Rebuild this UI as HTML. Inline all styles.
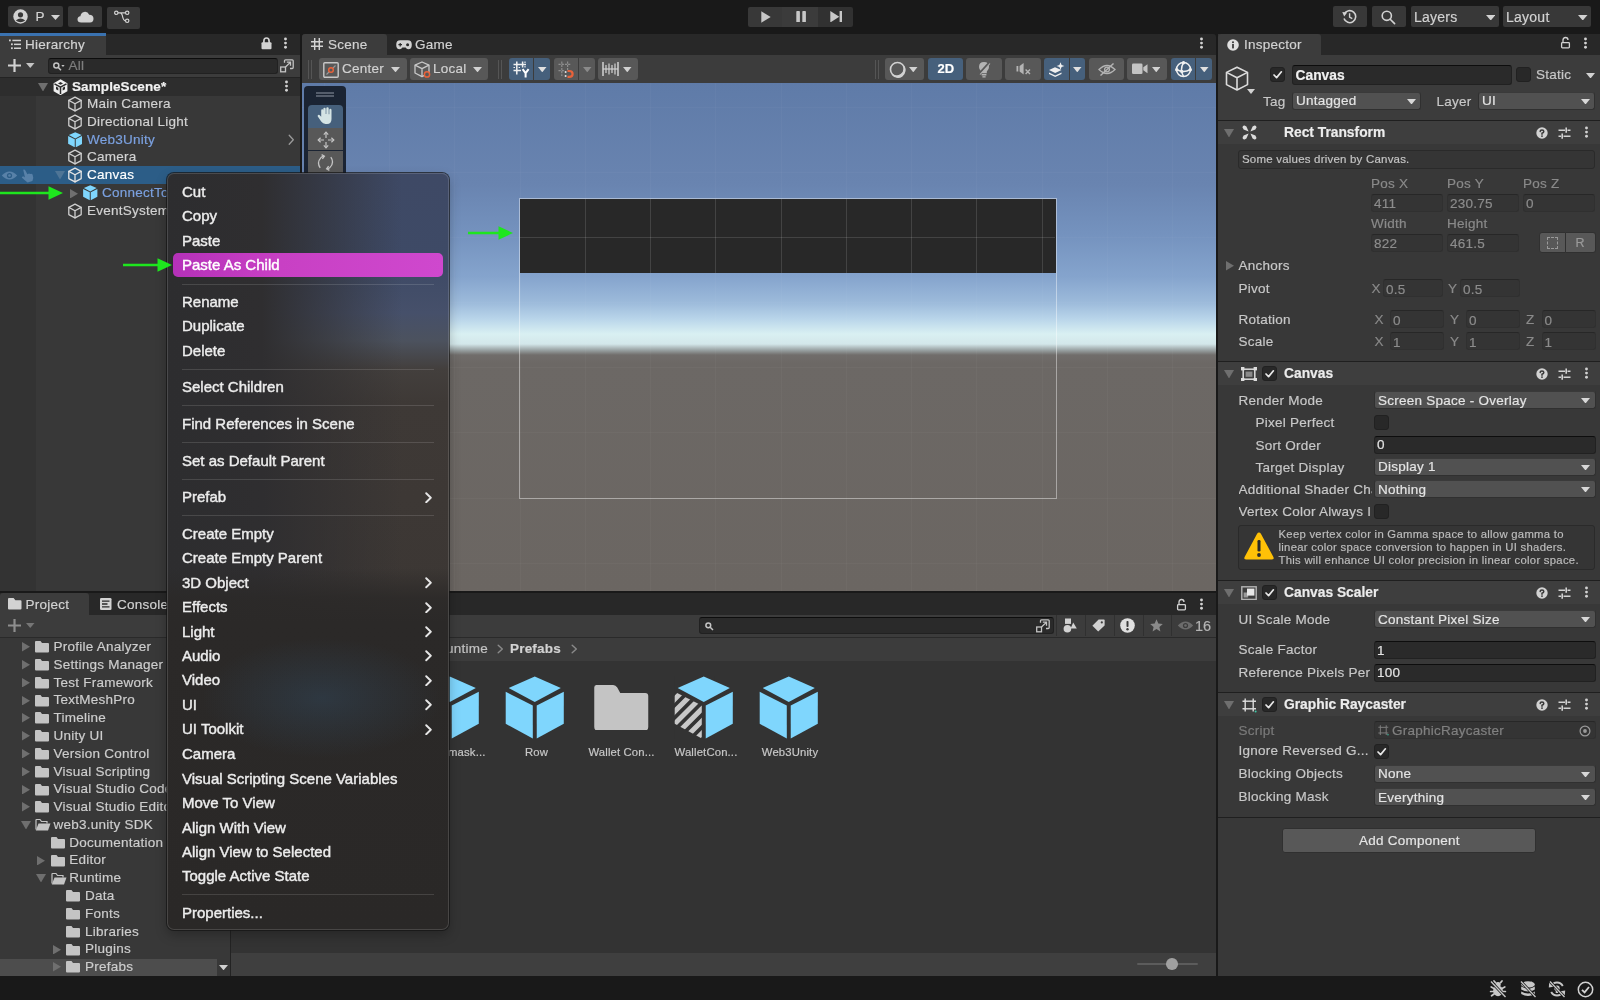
<!DOCTYPE html>
<html lang="en"><head><meta charset="utf-8"><title>Unity - SampleScene</title>
<style>
*{box-sizing:border-box;margin:0;padding:0}
html,body{width:1600px;height:1000px;overflow:hidden;background:#191919}
body{position:relative;font-family:"Liberation Sans",sans-serif;font-size:13.5px;letter-spacing:.25px;color:#d2d2d2}
div,span,svg{position:absolute}
.t{white-space:nowrap;line-height:20px;height:20px;-webkit-text-stroke:.18px currentColor}
.m{white-space:nowrap;line-height:20px;height:20px;font-size:15px;letter-spacing:0;color:#ececec;-webkit-text-stroke:.42px #ececec}
.dd{background:#515151;border-radius:3px;border:1px solid #303030;border-top-color:#3a3a3a}
.fld{background:#2a2a2a;border-radius:3px;border:1px solid #212121;border-top-color:#0d0d0d}
.dfld{background:#343434;border-radius:3px;border:1px solid #303030;border-top-color:#272727}
.btn{background:#585858;border-radius:3px;border:1px solid #303030}
.tb{background:#383838;border-radius:2px}
.cb{background:#282828;border-radius:3px;border:1px solid #212121}
</style></head><body>
<div id="app" style="left:0;top:0;width:1600px;height:1000px;will-change:transform">
<div style="left:0px;top:0px;width:1600px;height:33px;background:#191919;"></div>
<div class="tb" style="left:8px;top:6px;width:55px;height:21px;"></div>
<svg style="left:13px;top:9px;" width="15" height="15" viewBox="0 0 15 15"><circle cx="7.5" cy="7.5" r="7.2" fill="#d2d2d2"/><circle cx="7.5" cy="5.8" r="2.6" fill="#383838"/><path d="M2.8 11.6 Q7.5 7.6 12.2 11.6 Q7.5 15 2.8 11.6Z" fill="#383838"/></svg>
<span class="t" style="left:35.5px;top:6.75px;color:#d2d2d2;font-size:13.5px;">P</span>
<svg style="left:51px;top:14.5px;" width="9" height="5" viewBox="0 0 9 5"><path fill="#d2d2d2" d="M0 0 H9 L4.5 5 Z"/></svg>
<div class="tb" style="left:68px;top:6px;width:34px;height:21px;"></div>
<svg style="left:76.5px;top:10.5px;" width="17" height="12" viewBox="0 0 17 12"><path fill="#d2d2d2" d="M4.2 11.5 Q0.5 11.5 0.5 8.3 Q0.5 5.6 3.4 5.2 Q3.8 1.8 7 1 Q10.6 0.2 12.2 3.8 Q16.5 4 16.5 7.8 Q16.5 11.5 13 11.5 Z"/></svg>
<div class="tb" style="left:107px;top:6.5px;width:33px;height:22px;"></div>
<svg style="left:114px;top:10px;" width="16" height="14" viewBox="0 0 16 14"><g fill="none" stroke="#d2d2d2" stroke-width="1.2"><circle cx="2.3" cy="2.8" r="1.7"/><circle cx="13.2" cy="2.8" r="1.7"/><circle cx="13.2" cy="10.8" r="1.7"/><path d="M4 2.8 H11.5 M6.2 2.8 Q7.5 2.8 8.2 5 Q9.3 10.8 11.5 10.8"/></g></svg>
<div style="left:748px;top:6.5px;width:34px;height:20px;background:#383838;border-radius:2px 0 0 2px"></div>
<div style="left:782px;top:6.5px;width:36px;height:20px;background:#3b3b3b;"></div>
<div style="left:818px;top:6.5px;width:34.5px;height:20px;background:#313131;border-radius:0 2px 2px 0"></div>
<svg style="left:760.5px;top:10.5px;" width="10" height="12" viewBox="0 0 10 12"><path d="M0.3 0.3 L9.7 6 L0.3 11.7Z" fill="#c8c8c8"/></svg>
<svg style="left:795.5px;top:10.8px;" width="11" height="11.5" viewBox="0 0 11 11.5"><rect x="0.3" y="0" width="3.6" height="11.5" rx=".8" fill="#c8c8c8"/><rect x="6.3" y="0" width="3.6" height="11.5" rx=".8" fill="#c8c8c8"/></svg>
<svg style="left:829.5px;top:10.8px;" width="13" height="11.5" viewBox="0 0 13 11.5"><path d="M0.3 0 L9.3 5.75 L0.3 11.5Z" fill="#c8c8c8"/><rect x="9.6" y="0" width="2.4" height="11.5" fill="#c8c8c8"/></svg>
<div class="tb" style="left:1333px;top:6px;width:34px;height:21px;"></div>
<svg style="left:1342px;top:9px;" width="15" height="15" viewBox="0 0 15 15"><g fill="none" stroke="#d2d2d2" stroke-width="1.6"><path d="M2.3 5 A6 6 0 1 1 2 9.6"/><path d="M7.6 4.2 V8 L10.3 9.6" stroke-width="1.4"/></g><path d="M0.3 3 L5.2 3.6 L2.2 7.4Z" fill="#d2d2d2"/></svg>
<div class="tb" style="left:1372px;top:6px;width:34px;height:21px;"></div>
<svg style="left:1381px;top:9.5px;" width="15" height="15" viewBox="0 0 15 15"><g fill="none" stroke="#d2d2d2" stroke-width="1.6"><circle cx="5.8" cy="5.8" r="4.6"/><path d="M9.2 9.2 L13.6 13.6" stroke-linecap="round"/></g></svg>
<div class="tb" style="left:1410.5px;top:6px;width:88px;height:21px;"></div>
<span class="t" style="left:1414px;top:6.75px;font-size:14px;">Layers</span>
<svg style="left:1485.5px;top:14.5px;" width="9.5" height="5.5" viewBox="0 0 9.5 5.5"><path fill="#d2d2d2" d="M0 0 H9.5 L4.75 5.5 Z"/></svg>
<div class="tb" style="left:1503px;top:6px;width:87.5px;height:21px;"></div>
<span class="t" style="left:1506px;top:6.75px;font-size:14px;">Layout</span>
<svg style="left:1578px;top:14.5px;" width="9.5" height="5.5" viewBox="0 0 9.5 5.5"><path fill="#d2d2d2" d="M0 0 H9.5 L4.75 5.5 Z"/></svg>
<div style="left:0px;top:33.5px;width:299.5px;height:557px;background:#383838;"></div>
<div style="left:0px;top:33.5px;width:299.5px;height:21.5px;background:#282828;"></div>
<div style="left:0px;top:33.5px;width:105.5px;height:21.5px;background:#3c3c3c;border-radius:3px 3px 0 0"></div>
<div style="left:0px;top:33.3px;width:105.5px;height:2.4px;background:#3a72b0;"></div>
<svg style="left:8.5px;top:39px;" width="12" height="11" viewBox="0 0 12 11"><g fill="#d2d2d2"><rect x="0" y="0.5" width="1.8" height="1.8"/><rect x="3.4" y="0.7" width="8.6" height="1.5"/><rect x="2" y="4.4" width="1.8" height="1.8"/><rect x="5" y="4.6" width="7" height="1.5"/><rect x="2" y="8.3" width="1.8" height="1.8"/><rect x="5" y="8.5" width="7" height="1.5"/></g></svg>
<span class="t" style="left:25px;top:34.95px;">Hierarchy</span>
<svg style="left:260.7px;top:36.8px;" width="11" height="13" viewBox="0 0 11 13"><path fill="none" stroke="#d2d2d2" stroke-width="1.7" d="M2.9 6 V4.2 Q2.9 1 5.5 1 Q8.1 1 8.1 4.2 V6"/><rect x="0.5" y="5.3" width="10" height="6.9" rx="1" fill="#d2d2d2"/></svg>
<svg style="left:282.5px;top:37.1px;" width="5" height="12.2" viewBox="0 0 5 12.2"><circle cx="2.5" cy="2.0" r="1.45" fill="#d2d2d2"/><circle cx="2.5" cy="6.1" r="1.45" fill="#d2d2d2"/><circle cx="2.5" cy="10.2" r="1.45" fill="#d2d2d2"/></svg>
<div style="left:0px;top:55px;width:299.5px;height:22.5px;background:#3c3c3c;"></div>
<div style="left:0px;top:77px;width:299.5px;height:1px;background:#232323;"></div>
<svg style="left:8px;top:59px;" width="13" height="13" viewBox="0 0 13 13"><path d="M6.5 0 V13 M0 6.5 H13" stroke="#d2d2d2" stroke-width="2.2"/></svg>
<svg style="left:26px;top:63.3px;" width="8.5" height="5" viewBox="0 0 8.5 5"><path fill="#c4c4c4" d="M0 0 H8.5 L4.25 5 Z"/></svg>
<div class="fld" style="left:48px;top:57.5px;width:230px;height:16.5px;"></div>
<svg style="left:53px;top:61.5px;" width="12" height="9" viewBox="0 0 12 9"><g fill="none" stroke="#c4c4c4" stroke-width="1.5"><circle cx="3.3" cy="3.5" r="2.5"/><path d="M5.2 5.4 L8 8.2"/></g><path d="M8.3 3 H11.6 L10 5 Z" fill="#c4c4c4"/></svg>
<span class="t" style="left:68.5px;top:56.25px;color:#7e7e7e;font-size:13.5px;">All</span>
<svg style="left:280px;top:58.5px;" width="14" height="14" viewBox="0 0 14 14"><g fill="none" stroke="#c4c4c4" stroke-width="1.3"><path d="M4.5 3.8 V1.8 Q4.5 0.8 5.5 0.8 H12.2 Q13.2 0.8 13.2 1.8 V8.5 Q13.2 9.5 12.2 9.5 H10"/><rect x="0.7" y="8" width="4.8" height="4.8"/><path d="M5.5 8 L10.3 3.4 M6.8 3.2 H10.5 V6.8"/></g></svg>
<div style="left:0px;top:78px;width:36px;height:512.5px;background:#333333;"></div>
<div style="left:0px;top:78px;width:299.5px;height:17.5px;background:#2d2d2d;"></div>
<svg style="left:37.5px;top:82.5px;" width="10" height="8.5" viewBox="0 0 10 8.5"><path fill="#6f6f6f" d="M0 0 H10 L5.0 8.5 Z"/></svg>
<svg style="left:52.5px;top:78.5px;" width="15" height="16.5" viewBox="0 0 15 16.5"><path fill="#f0f0f0" d="M7.5 0.3 L14.4 4.2 V12.2 L7.5 16.2 L0.6 12.2 V4.2 Z"/><g fill="none" stroke="#2d2d2d" stroke-width="1.5"><path d="M7.5 8.2 V15 M7.5 8.2 L1.5 4.8 M7.5 8.2 L13.5 4.8"/></g><g fill="#2d2d2d"><path d="M7.5 3 L10 4.4 L7.5 5.8 L5 4.4Z"/><path d="M3 7.4 L5.3 8.7 V11.5 L3 10.2Z"/><path d="M12 7.4 L9.7 8.7 V11.5 L12 10.2Z"/></g></svg>
<span class="t" style="left:72px;top:76.75px;color:#f2f2f2;font-size:13.5px;font-weight:700;letter-spacing:.1px">SampleScene*</span>
<svg style="left:283.5px;top:80.3px;" width="5" height="12.2" viewBox="0 0 5 12.2"><circle cx="2.5" cy="2.0" r="1.45" fill="#d2d2d2"/><circle cx="2.5" cy="6.1" r="1.45" fill="#d2d2d2"/><circle cx="2.5" cy="10.2" r="1.45" fill="#d2d2d2"/></svg>
<svg style="left:67px;top:96px;" width="16" height="16" viewBox="0 0 16 16"><g fill="none" stroke="#cfcfcf" stroke-width="1.3" stroke-linejoin="round" stroke-linecap="round"><path d="M8 1.2 L14.2 4.4 V11.6 L8 14.9 L1.8 11.6 V4.4 Z"/><path d="M1.8 4.4 L8 7.7 L14.2 4.4 M8 7.7 V14.9"/></g></svg>
<span class="t" style="left:87px;top:94.25px;">Main Camera</span>
<svg style="left:67px;top:113.7px;" width="16" height="16" viewBox="0 0 16 16"><g fill="none" stroke="#cfcfcf" stroke-width="1.3" stroke-linejoin="round" stroke-linecap="round"><path d="M8 1.2 L14.2 4.4 V11.6 L8 14.9 L1.8 11.6 V4.4 Z"/><path d="M1.8 4.4 L8 7.7 L14.2 4.4 M8 7.7 V14.9"/></g></svg>
<span class="t" style="left:87px;top:111.95px;">Directional Light</span>
<svg style="left:67.5px;top:131.9px;" width="14.5" height="15.5" viewBox="0 0 60 64"><g fill="#7fd6fd"><path d="M30 0.5 L56.5 12.3 L30 26.5 L3.5 12.3 Z"/><path d="M0.5 16 L28 30 V63.4 L0.5 48.6 Z"/><path d="M59.5 16 L32 30 V63.4 L59.5 48.6 Z"/></g></svg>
<span class="t" style="left:87px;top:129.75px;color:#7ba1e0;">Web3Unity</span>
<svg style="left:67px;top:149.2px;" width="16" height="16" viewBox="0 0 16 16"><g fill="none" stroke="#cfcfcf" stroke-width="1.3" stroke-linejoin="round" stroke-linecap="round"><path d="M8 1.2 L14.2 4.4 V11.6 L8 14.9 L1.8 11.6 V4.4 Z"/><path d="M1.8 4.4 L8 7.7 L14.2 4.4 M8 7.7 V14.9"/></g></svg>
<span class="t" style="left:87px;top:147.45px;">Camera</span>
<svg style="left:288px;top:134px;" width="6.5" height="11.5" viewBox="0 0 6.5 11.5"><path fill="none" stroke="#9a9a9a" stroke-width="1.3" stroke-linecap="round" stroke-linejoin="round" d="M1.2 1.2 L5.3 5.75 L1.2 10.3"/></svg>
<div style="left:0px;top:166.4px;width:299.5px;height:17.9px;background:#2c5d87;"></div>
<svg style="left:1px;top:169.5px;" width="17" height="11" viewBox="0 0 17 11"><path d="M0.8 5.5 Q8.5 -2.6 16.2 5.5 Q8.5 13.6 0.8 5.5Z" fill="#5881a8"/><circle cx="8.5" cy="5.5" r="2.6" fill="#2c5d87"/><circle cx="8.5" cy="5.5" r="1.3" fill="#5881a8"/></svg>
<svg style="left:21px;top:168.5px;" width="13" height="14" viewBox="0 0 13 14"><path fill="#5881a8" d="M2.2 0.8 Q3.4 0 4.2 1.2 L6.4 5.2 L8 4.6 L9.2 5 L10.4 4.8 L11.6 5.6 Q13 9 11.4 12 L6.6 13.4 Q3.4 11 0.8 8.4 Q1.2 7 2.8 7.6 L4 8.4 Z"/></svg>
<svg style="left:55px;top:171px;" width="10" height="8.5" viewBox="0 0 10 8.5"><path fill="#4f7596" d="M0 0 H10 L5.0 8.5 Z"/></svg>
<svg style="left:67px;top:167px;" width="16" height="16" viewBox="0 0 16 16"><g fill="none" stroke="#e4e4e4" stroke-width="1.3" stroke-linejoin="round" stroke-linecap="round"><path d="M8 1.2 L14.2 4.4 V11.6 L8 14.9 L1.8 11.6 V4.4 Z"/><path d="M1.8 4.4 L8 7.7 L14.2 4.4 M8 7.7 V14.9"/></g></svg>
<span class="t" style="left:87px;top:165.25px;color:#ffffff;">Canvas</span>
<svg style="left:70px;top:188.5px;" width="8" height="9.5" viewBox="0 0 8 9.5"><path fill="#6f6f6f" d="M0 0 L8 4.75 L0 9.5 Z"/></svg>
<svg style="left:83px;top:185.20000000000002px;" width="14.5" height="15.5" viewBox="0 0 60 64"><g fill="#7fd6fd"><path d="M30 0.5 L56.5 12.3 L30 26.5 L3.5 12.3 Z"/><path d="M0.5 16 L28 30 V63.4 L0.5 48.6 Z"/><path d="M59.5 16 L32 30 V63.4 L59.5 48.6 Z"/></g></svg>
<span class="t" style="left:102px;top:183.05px;color:#7ba1e0;">ConnectTo</span>
<svg style="left:67px;top:202.6px;" width="16" height="16" viewBox="0 0 16 16"><g fill="none" stroke="#cfcfcf" stroke-width="1.3" stroke-linejoin="round" stroke-linecap="round"><path d="M8 1.2 L14.2 4.4 V11.6 L8 14.9 L1.8 11.6 V4.4 Z"/><path d="M1.8 4.4 L8 7.7 L14.2 4.4 M8 7.7 V14.9"/></g></svg>
<span class="t" style="left:87px;top:200.85px;">EventSystem</span>
<div style="left:302px;top:33.5px;width:914px;height:21.5px;background:#282828;border-radius:3px 3px 0 0"></div>
<div style="left:302px;top:33.5px;width:85px;height:21.5px;background:#3c3c3c;border-radius:3px 3px 0 0"></div>
<svg style="left:311px;top:38px;" width="12" height="12" viewBox="0 0 12 12"><path d="M3.7 0 V12 M8.3 0 V12 M0 3.7 H12 M0 8.3 H12" stroke="#d2d2d2" stroke-width="1.45"/></svg>
<span class="t" style="left:328px;top:34.95px;">Scene</span>
<svg style="left:396px;top:40px;" width="16" height="9.5" viewBox="0 0 16 9.5"><path fill="#d2d2d2" d="M4.2 0.3 H11.8 Q15.8 0.3 15.8 4.7 Q15.8 9.2 12.2 9.2 Q10.6 9.2 9.6 7.6 H6.4 Q5.4 9.2 3.8 9.2 Q0.2 9.2 0.2 4.7 Q0.2 0.3 4.2 0.3Z"/><path d="M2.4 4.7 H6 M4.2 2.9 V6.5" stroke="#282828" stroke-width="1.2"/><circle cx="11.6" cy="4.7" r="1.5" fill="#282828"/></svg>
<span class="t" style="left:415px;top:34.95px;">Game</span>
<svg style="left:1198.5px;top:37.1px;" width="5" height="12.2" viewBox="0 0 5 12.2"><circle cx="2.5" cy="2.0" r="1.45" fill="#d2d2d2"/><circle cx="2.5" cy="6.1" r="1.45" fill="#d2d2d2"/><circle cx="2.5" cy="10.2" r="1.45" fill="#d2d2d2"/></svg>
<div style="left:302px;top:55px;width:914px;height:27.5px;background:#3c3c3c;"></div>
<div style="left:302px;top:82.5px;width:914px;height:1px;background:#232323;"></div>
<div style="left:308px;top:60px;width:1px;height:19px;background:#555;"></div>
<div style="left:310.5px;top:60px;width:1px;height:19px;background:#555;"></div>
<div style="left:319px;top:58px;width:87.5px;height:21.5px;background:#585858;border-radius:3px"></div>
<svg style="left:323px;top:61.5px;" width="16" height="16" viewBox="0 0 16 16"><rect x="0.8" y="0.8" width="14.4" height="14.4" rx="1" fill="none" stroke="#c8c8c8" stroke-width="1.4"/><path d="M3.5 12.5 L12.5 3.5" stroke="#9a9a9a" stroke-width="1.1"/><circle cx="8" cy="8" r="2.3" fill="#585858" stroke="#e8623a" stroke-width="1.5"/></svg>
<span class="t" style="left:342px;top:59.25px;">Center</span>
<svg style="left:391px;top:66.5px;" width="9" height="5.3" viewBox="0 0 9 5.3"><path fill="#d2d2d2" d="M0 0 H9 L4.5 5.3 Z"/></svg>
<div style="left:410px;top:58px;width:78px;height:21.5px;background:#585858;border-radius:3px"></div>
<svg style="left:414px;top:60.5px;" width="18" height="18" viewBox="0 0 18 18"><g fill="none" stroke="#c8c8c8" stroke-width="1.3" stroke-linejoin="round"><path d="M8 1 L15 4.2 V12 L8 15.6 L1 12 V4.2Z"/><path d="M1 4.2 L8 7.6 L15 4.2 M8 7.6 V15.6"/></g><circle cx="13" cy="13.4" r="2.6" fill="#585858" stroke="#e8623a" stroke-width="1.5"/></svg>
<span class="t" style="left:433px;top:59.25px;">Local</span>
<svg style="left:473px;top:66.5px;" width="9" height="5.3" viewBox="0 0 9 5.3"><path fill="#d2d2d2" d="M0 0 H9 L4.5 5.3 Z"/></svg>
<div style="left:498px;top:60px;width:1px;height:19px;background:#555;"></div>
<div style="left:500.5px;top:60px;width:1px;height:19px;background:#555;"></div>
<div style="left:509px;top:58px;width:24px;height:21.5px;background:#46607c;border-radius:3px 0 0 3px"></div>
<div style="left:534px;top:58px;width:16px;height:21.5px;background:#46607c;border-radius:0 3px 3px 0"></div>
<svg style="left:513px;top:61px;" width="17" height="17" viewBox="0 0 17 17"><g stroke="#f0f0f0" stroke-width="1.5" fill="none"><path d="M3.8 0.5 V13.5 M9.6 0.5 V6.5 M0.5 3.4 H13 M0.5 9.6 H8"/><path d="M0.5 6.5 H2 M5.6 6.5 H7 M12 0.5 V2 M12 5 V6.5" stroke-width="1.1"/></g><path d="M9.6 8.2 L12.6 12.2 V16.4 M15.6 8.2 L12.6 12.2" stroke="#ffffff" stroke-width="2" fill="none"/></svg>
<svg style="left:538px;top:66.5px;" width="8.5" height="5.3" viewBox="0 0 8.5 5.3"><path fill="#e0e0e0" d="M0 0 H8.5 L4.25 5.3 Z"/></svg>
<div style="left:554px;top:58px;width:24px;height:21.5px;background:#585858;border-radius:3px 0 0 3px"></div>
<div style="left:579px;top:58px;width:16px;height:21.5px;background:#585858;border-radius:0 3px 3px 0"></div>
<svg style="left:558px;top:61px;" width="17" height="17" viewBox="0 0 17 17"><g stroke="#8e8e8e" stroke-width="1.2" fill="none" stroke-dasharray="2.2 1"><path d="M3.8 0.5 V15 M9.6 0.5 V9 M0.5 3.4 H13 M0.5 9.6 H7"/></g><circle cx="7.6" cy="11" r="1" fill="#e0e0e0"/><circle cx="7.6" cy="15" r="1" fill="#e0e0e0"/><path d="M9.5 10 H11.3 Q14.6 10 14.6 12.9 Q14.6 15.8 11.3 15.8 H9.5" stroke="#e8623a" stroke-width="2.2" fill="none"/></svg>
<svg style="left:583px;top:66.5px;" width="8.5" height="5.3" viewBox="0 0 8.5 5.3"><path fill="#8a8a8a" d="M0 0 H8.5 L4.25 5.3 Z"/></svg>
<div style="left:598px;top:58px;width:39.5px;height:21.5px;background:#585858;border-radius:3px"></div>
<svg style="left:601.5px;top:62px;" width="17" height="14" viewBox="0 0 17 14"><g stroke="#d2d2d2" fill="none"><path d="M1 0 V14 M16 0 V14" stroke-width="1.5"/><path d="M4 3 V11 M7 1.5 V12.5 M10 3 V11 M13 1.5 V12.5" stroke-width="1.2"/><path d="M1 7 H16" stroke-width="1.2"/></g></svg>
<svg style="left:623px;top:66.5px;" width="8.5" height="5.3" viewBox="0 0 8.5 5.3"><path fill="#d2d2d2" d="M0 0 H8.5 L4.25 5.3 Z"/></svg>
<div style="left:875px;top:60px;width:1px;height:19px;background:#555;"></div>
<div style="left:877.5px;top:60px;width:1px;height:19px;background:#555;"></div>
<div style="left:884.5px;top:58px;width:39.5px;height:21.5px;background:#585858;border-radius:3px"></div>
<svg style="left:889px;top:61px;" width="17" height="17" viewBox="0 0 17 17"><circle cx="8.5" cy="8.5" r="7" fill="none" stroke="#d2d2d2" stroke-width="1.6"/><path d="M14.6 5 A7 7 0 0 1 3.2 13.4 A7.4 7.4 0 0 0 14.6 5Z" fill="#d2d2d2" stroke="#d2d2d2" stroke-width="1.2"/></svg>
<svg style="left:909px;top:66.5px;" width="8.5" height="5.3" viewBox="0 0 8.5 5.3"><path fill="#d2d2d2" d="M0 0 H8.5 L4.25 5.3 Z"/></svg>
<div style="left:927.5px;top:58px;width:35.5px;height:21.5px;background:#46607c;border-radius:3px"></div>
<span class="t" style="left:937.5px;top:59.25px;color:#ffffff;font-size:13px;font-weight:700;letter-spacing:0">2D</span>
<div style="left:966.3px;top:58px;width:35.3px;height:21.5px;background:#585858;border-radius:3px"></div>
<svg style="left:977px;top:60.5px;" width="14" height="17" viewBox="0 0 14 17"><path fill="#b4b4b4" d="M7 1 Q12 1 12 6 Q12 8.6 9.8 10.4 V12.2 H4.2 V10.4 Q2 8.6 2 6 Q2 1 7 1Z"/><rect x="4.6" y="13" width="4.8" height="1.5" fill="#b4b4b4"/><rect x="5.4" y="15.2" width="3.2" height="1.3" fill="#b4b4b4"/><path d="M12.5 1.5 L2 13" stroke="#585858" stroke-width="2.4"/><path d="M13 2.5 L3 13.5" stroke="#b4b4b4" stroke-width="1.1"/></svg>
<div style="left:1005px;top:58px;width:35.6px;height:21.5px;background:#585858;border-radius:3px"></div>
<svg style="left:1016px;top:62px;" width="16" height="14" viewBox="0 0 16 14"><g fill="#b4b4b4"><rect x="0.5" y="4" width="1.8" height="5.5"/><path d="M3.6 4 L7.6 1 V12.5 L3.6 9.5Z"/></g><path d="M9.6 7.6 L14 12 M14 7.6 L9.6 12" stroke="#b4b4b4" stroke-width="1.4"/></svg>
<div style="left:1044px;top:58px;width:25px;height:21.5px;background:#46607c;border-radius:3px 0 0 3px"></div>
<div style="left:1069.8px;top:58px;width:15.5px;height:21.5px;background:#46607c;border-radius:0 3px 3px 0"></div>
<svg style="left:1048px;top:61.5px;" width="17" height="16" viewBox="0 0 17 16"><g fill="#f0f0f0"><path d="M1 8 L7 5.2 L13.5 8 L7.2 11 Z"/><path d="M1 10.6 L7.2 13.6 L13.5 10.6 L13.5 12 L7.2 15 L1 12Z"/><path d="M12.5 0.3 L13.6 3 L16.4 4 L13.6 5.1 L12.5 7.8 L11.4 5.1 L8.6 4 L11.4 3Z"/></g></svg>
<svg style="left:1073.2px;top:66.5px;" width="8.5" height="5.3" viewBox="0 0 8.5 5.3"><path fill="#e0e0e0" d="M0 0 H8.5 L4.25 5.3 Z"/></svg>
<div style="left:1088.7px;top:58px;width:35.6px;height:21.5px;background:#585858;border-radius:3px"></div>
<svg style="left:1097.5px;top:62.5px;" width="18" height="13" viewBox="0 0 18 13"><g fill="none" stroke="#b4b4b4" stroke-width="1.3"><path d="M1 6.5 Q9 -1.5 17 6.5 Q9 14.5 1 6.5Z"/><circle cx="9" cy="6.5" r="2.4"/><path d="M15.5 0.5 L2.5 12.5" stroke-width="1.4"/></g></svg>
<div style="left:1127.2px;top:58px;width:40.3px;height:21.5px;background:#585858;border-radius:3px"></div>
<svg style="left:1131.5px;top:63px;" width="16" height="11.5" viewBox="0 0 16 11.5"><rect x="0" y="0.5" width="10.5" height="10.5" rx="1.3" fill="#c4c4c4"/><path d="M11.3 4.2 L15.5 1.2 V10.3 L11.3 7.3Z" fill="#c4c4c4"/></svg>
<svg style="left:1151.5px;top:66.5px;" width="8.5" height="5.3" viewBox="0 0 8.5 5.3"><path fill="#d2d2d2" d="M0 0 H8.5 L4.25 5.3 Z"/></svg>
<div style="left:1171px;top:58px;width:24px;height:21.5px;background:#46607c;border-radius:3px 0 0 3px"></div>
<div style="left:1196px;top:58px;width:16px;height:21.5px;background:#46607c;border-radius:0 3px 3px 0"></div>
<svg style="left:1174.5px;top:60.5px;" width="17" height="17" viewBox="0 0 17 17"><g fill="none" stroke="#f0f0f0" stroke-width="1.5"><circle cx="8.5" cy="8.5" r="7"/><path d="M1.6 8.5 Q8.5 12.5 15.4 8.5 M8.5 1.6 Q4.5 8.5 8.5 15.4"/></g><g fill="#f0f0f0"><circle cx="8.5" cy="1.7" r="1.7"/><circle cx="1.7" cy="8.7" r="1.7"/><circle cx="15.3" cy="8.7" r="1.7"/><circle cx="6.8" cy="10.4" r="1.7"/></g></svg>
<svg style="left:1200px;top:66.5px;" width="8.5" height="5.3" viewBox="0 0 8.5 5.3"><path fill="#e0e0e0" d="M0 0 H8.5 L4.25 5.3 Z"/></svg>
<div style="left:302px;top:83px;width:914px;height:508px;background:linear-gradient(180deg,#5f7ba8 0px,#6984b0 101px,#7593bf 153px,#85a4cd 194px,#9dbbdb 220px,#b9d5ea 236px,#d9f0f2 251px,#d3e7ea 261px,#9aa3a4 267px,#706d6b 272px,#6c6865 280px,#6b6662 508px);overflow:hidden"><div style="left:22px;top:0px;width:1px;height:508px;background:rgba(255,255,255,.028);"></div>
<div style="left:87px;top:0px;width:1px;height:508px;background:rgba(255,255,255,.028);"></div>
<div style="left:152px;top:0px;width:1px;height:508px;background:rgba(255,255,255,.028);"></div>
<div style="left:217.5px;top:0px;width:1px;height:508px;background:rgba(255,255,255,.028);"></div>
<div style="left:282.70000000000005px;top:0px;width:1px;height:508px;background:rgba(255,255,255,.028);"></div>
<div style="left:348px;top:0px;width:1px;height:508px;background:rgba(255,255,255,.028);"></div>
<div style="left:413.29999999999995px;top:0px;width:1px;height:508px;background:rgba(255,255,255,.028);"></div>
<div style="left:478.5px;top:0px;width:1px;height:508px;background:rgba(255,255,255,.028);"></div>
<div style="left:543.7px;top:0px;width:1px;height:508px;background:rgba(255,255,255,.028);"></div>
<div style="left:609px;top:0px;width:1px;height:508px;background:rgba(255,255,255,.028);"></div>
<div style="left:674.2px;top:0px;width:1px;height:508px;background:rgba(255,255,255,.028);"></div>
<div style="left:739.5px;top:0px;width:1px;height:508px;background:rgba(255,255,255,.028);"></div>
<div style="left:804.7px;top:0px;width:1px;height:508px;background:rgba(255,255,255,.028);"></div>
<div style="left:870px;top:0px;width:1px;height:508px;background:rgba(255,255,255,.028);"></div>
<div style="left:0px;top:24px;width:915px;height:1px;background:rgba(255,255,255,.028);"></div>
<div style="left:0px;top:89px;width:915px;height:1px;background:rgba(255,255,255,.028);"></div>
<div style="left:0px;top:154px;width:915px;height:1px;background:rgba(255,255,255,.028);"></div>
<div style="left:0px;top:219px;width:915px;height:1px;background:rgba(255,255,255,.028);"></div>
<div style="left:0px;top:284px;width:915px;height:1px;background:rgba(255,255,255,.028);"></div>
<div style="left:0px;top:349px;width:915px;height:1px;background:rgba(255,255,255,.028);"></div>
<div style="left:0px;top:414.5px;width:915px;height:1px;background:rgba(255,255,255,.028);"></div>
<div style="left:0px;top:479.70000000000005px;width:915px;height:1px;background:rgba(255,255,255,.028);"></div>
<div style="left:217px;top:114.5px;width:537.5px;height:301px;border:1px solid rgba(255,255,255,.42)"></div>
<div style="left:218px;top:115.5px;width:535.5px;height:74px;background:#282828;overflow:hidden"><div style="left:64.70000000000005px;top:0px;width:1px;height:74.5px;background:rgba(255,255,255,.13);"></div>
<div style="left:130px;top:0px;width:1px;height:74.5px;background:rgba(255,255,255,.13);"></div>
<div style="left:195.29999999999995px;top:0px;width:1px;height:74.5px;background:rgba(255,255,255,.13);"></div>
<div style="left:260.5px;top:0px;width:1px;height:74.5px;background:rgba(255,255,255,.13);"></div>
<div style="left:325.70000000000005px;top:0px;width:1px;height:74.5px;background:rgba(255,255,255,.13);"></div>
<div style="left:391px;top:0px;width:1px;height:74.5px;background:rgba(255,255,255,.13);"></div>
<div style="left:456.20000000000005px;top:0px;width:1px;height:74.5px;background:rgba(255,255,255,.13);"></div>
<div style="left:521.5px;top:0px;width:1px;height:74.5px;background:rgba(255,255,255,.13);"></div>
<div style="left:0px;top:38.5px;width:535px;height:1px;background:rgba(255,255,255,.13);"></div>
</div>
<div style="left:2px;top:3px;width:42px;height:110px;background:#1b2433;border-radius:4px 4px 0 0"></div>
<div style="left:14px;top:9.200000000000003px;width:18px;height:1.5px;background:#555d6b;"></div>
<div style="left:14px;top:12.299999999999997px;width:18px;height:1.5px;background:#555d6b;"></div>
<div style="left:5.5px;top:22px;width:35.5px;height:22.5px;background:#46607c;border-radius:4px 4px 0 0"></div>
<div style="left:5.5px;top:45.30000000000001px;width:35.5px;height:22px;background:#585858;"></div>
<div style="left:5.5px;top:68.19999999999999px;width:35.5px;height:24px;background:#585858;"></div>
<svg style="left:14.5px;top:24px;" width="17" height="18" viewBox="0 0 17 18"><path fill="#d5e4e4" d="M6.3 2.2 Q6.3 0.8 7.5 0.8 Q8.7 0.8 8.7 2.2 V7 H9.3 V1.6 Q9.3 0.3 10.5 0.3 Q11.7 0.3 11.7 1.6 V7.2 H12.3 V3 Q12.3 1.8 13.4 1.8 Q14.5 1.8 14.5 3 V12 Q14.5 17 10 17 H8.6 Q5.8 17 4.2 14.6 L0.8 9.6 Q0.2 8.6 1.2 8 Q2.2 7.5 3 8.4 L4.2 9.8 V3.4 Q4.2 2.2 5.2 2.2 Q6.3 2.2 6.3 3.4 Z"/></svg>
<svg style="left:14.5px;top:47.5px;" width="18" height="18" viewBox="0 0 18 18"><g fill="none" stroke="#c4c4c4" stroke-width="1.2"><path d="M9 1.5 V7 M9 11 V16.5 M1.5 9 H7 M11 9 H16.5"/><path d="M6.8 3.6 L9 1.2 L11.2 3.6 M6.8 14.4 L9 16.8 L11.2 14.4 M3.6 6.8 L1.2 9 L3.6 11.2 M14.4 6.8 L16.8 9 L14.4 11.2"/></g></svg>
<svg style="left:15px;top:71px;" width="17" height="17" viewBox="0 0 17 17"><g fill="none" stroke="#c4c4c4" stroke-width="1.3"><path d="M3.2 13.8 Q-0.6 8.5 4 3.6 Q5.4 2.4 7 2.2 M13.8 3.2 Q17.6 8.5 13 13.4 Q11.6 14.6 10 14.8"/><path d="M4.6 0.6 L7.4 2.2 L5.4 4.8 M12.4 16.4 L9.6 14.8 L11.6 12.2"/></g></svg>
</div>
<div style="left:1218px;top:33.5px;width:382px;height:942.5px;background:#383838;"></div>
<div style="left:1218px;top:33.5px;width:382px;height:21.5px;background:#282828;border-radius:3px 0 0 0"></div>
<div style="left:1218px;top:33.5px;width:102.5px;height:21.5px;background:#3c3c3c;border-radius:3px 3px 0 0"></div>
<svg style="left:1227px;top:39px;" width="12" height="12" viewBox="0 0 12 12"><circle cx="6" cy="6" r="5.8" fill="#e0e0e0"/><rect x="5.1" y="5" width="1.8" height="4.4" fill="#3c3c3c"/><circle cx="6" cy="3.2" r="1.05" fill="#3c3c3c"/></svg>
<span class="t" style="left:1244px;top:34.95px;">Inspector</span>
<svg style="left:1560px;top:36.3px;" width="11" height="13" viewBox="0 0 11 13"><path fill="none" stroke="#d2d2d2" stroke-width="1.3" d="M3 6.5 V4 Q3 1.5 5.5 1.5 Q8 1.5 8 4"/><rect x="1.6" y="6.6" width="7.8" height="5.2" rx="0.8" fill="none" stroke="#d2d2d2" stroke-width="1.3"/></svg>
<svg style="left:1582.5px;top:37.1px;" width="5" height="12.2" viewBox="0 0 5 12.2"><circle cx="2.5" cy="2.0" r="1.45" fill="#d2d2d2"/><circle cx="2.5" cy="6.1" r="1.45" fill="#d2d2d2"/><circle cx="2.5" cy="10.2" r="1.45" fill="#d2d2d2"/></svg>
<div style="left:1218px;top:55px;width:382px;height:65px;background:#3c3c3c;"></div>
<svg style="left:1225px;top:65.5px;" width="24" height="26" viewBox="0 0 24 26"><g fill="none" stroke="#dcdcdc" stroke-width="1.6" stroke-linejoin="round"><path d="M12 1.2 L22.5 6.4 V18.6 L12 24 L1.5 18.6 V6.4Z"/><path d="M1.5 6.4 L12 11.8 L22.5 6.4 M12 11.8 V24"/></g></svg>
<svg style="left:1246.5px;top:89px;" width="8" height="5" viewBox="0 0 8 5"><path fill="#d2d2d2" d="M0 0 H8 L4.0 5 Z"/></svg>
<div class="cb" style="left:1270px;top:67px;width:15px;height:15px;"></div>
<svg style="left:1272px;top:69px;" width="11" height="11" viewBox="0 0 11 11"><path fill="none" stroke="#e8e8e8" stroke-width="1.7" stroke-linecap="round" stroke-linejoin="round" d="M2 6 L4.6 8.6 L9.4 2.8"/></svg>
<div class="fld" style="left:1292px;top:65px;width:219.5px;height:19.5px;"></div>
<span class="t" style="left:1295.5px;top:66.05px;color:#f0f0f0;font-size:13.8px;font-weight:700;letter-spacing:0">Canvas</span>
<div class="cb" style="left:1516px;top:67px;width:15px;height:15px;"></div>
<span class="t" style="left:1536px;top:65.25px;color:#c8c8c8;">Static</span>
<svg style="left:1585.5px;top:72.5px;" width="9" height="5.5" viewBox="0 0 9 5.5"><path fill="#d2d2d2" d="M0 0 H9 L4.5 5.5 Z"/></svg>
<span class="t" style="left:1263px;top:91.75px;color:#c8c8c8;">Tag</span>
<div class="dd" style="left:1292px;top:92px;width:129px;height:18px;"></div>
<span class="t" style="left:1296px;top:91.45px;color:#e4e4e4;">Untagged</span>
<svg style="left:1406.5px;top:98.5px;" width="9" height="5.5" viewBox="0 0 9 5.5"><path fill="#d8d8d8" d="M0 0 H9 L4.5 5.5 Z"/></svg>
<span class="t" style="left:1436.5px;top:91.75px;color:#c8c8c8;">Layer</span>
<div class="dd" style="left:1478px;top:92px;width:117px;height:18px;"></div>
<span class="t" style="left:1482px;top:91.45px;color:#e4e4e4;">UI</span>
<svg style="left:1580.5px;top:98.5px;" width="9" height="5.5" viewBox="0 0 9 5.5"><path fill="#d8d8d8" d="M0 0 H9 L4.5 5.5 Z"/></svg>
<div style="left:1218px;top:120.0px;width:382px;height:1px;background:#1f1f1f;"></div>
<div style="left:1218px;top:121.0px;width:382px;height:23px;background:#3e3e3e;"></div>
<svg style="left:1224px;top:128.5px;" width="10" height="8.5" viewBox="0 0 10 8.5"><path fill="#6f6f6f" d="M0 0 H10 L5.0 8.5 Z"/></svg>
<svg style="left:1241.5px;top:125px;" width="15" height="15" viewBox="0 0 15 15"><g fill="#dcdcdc"><path d="M0.6 2.6 Q0.4 0.4 2.6 0.6 L4.4 1.6 L6.6 6.6 L1.6 4.4Z"/><path d="M14.4 2.6 Q14.6 0.4 12.4 0.6 L10.6 1.6 L8.4 6.6 L13.4 4.4Z"/><path d="M0.6 12.4 Q0.4 14.6 2.6 14.4 L4.4 13.4 L6.6 8.4 L1.6 10.6Z"/><path d="M14.4 12.4 Q14.6 14.6 12.4 14.4 L10.6 13.4 L8.4 8.4 L13.4 10.6Z"/></g></svg>
<span class="t" style="left:1284px;top:122.75px;color:#ececec;font-size:13.8px;font-weight:700;letter-spacing:0">Rect Transform</span>
<svg style="left:1535.5px;top:126.5px;" width="12" height="12" viewBox="0 0 12 12"><circle cx="6" cy="6" r="5.7" fill="#d2d2d2"/><path fill="none" stroke="#383838" stroke-width="1.5" stroke-linecap="round" d="M4.2 4.6 Q4.2 2.9 6 2.9 Q7.8 2.9 7.8 4.5 Q7.8 5.6 6 6.3 V7.2"/><circle cx="6" cy="9.1" r="0.95" fill="#383838"/></svg>
<svg style="left:1557.5px;top:126.5px;" width="13" height="12.5" viewBox="0 0 13 12.5"><g stroke="#d2d2d2" stroke-width="1.4" fill="none"><path d="M0.5 3.2 H7 M9.5 3.2 H12.5 M0.5 9.2 H3 M5.5 9.2 H12.5"/><path d="M8.2 0.6 V5.8 M4.2 6.6 V11.8" stroke-width="1.6"/></g></svg>
<svg style="left:1583.5px;top:126.3px;" width="5" height="12.2" viewBox="0 0 5 12.2"><circle cx="2.5" cy="2.0" r="1.45" fill="#d2d2d2"/><circle cx="2.5" cy="6.1" r="1.45" fill="#d2d2d2"/><circle cx="2.5" cy="10.2" r="1.45" fill="#d2d2d2"/></svg>
<div style="left:1238px;top:150px;width:357px;height:18.5px;background:#353535;border:1px solid #2a2a2a;border-radius:3px"></div>
<span class="t" style="left:1242px;top:149.45px;color:#c4c4c4;font-size:11.5px;letter-spacing:.2px">Some values driven by Canvas.</span>
<span class="t" style="left:1371px;top:174.25px;color:#8a8a8a;">Pos X</span>
<div class="dfld" style="left:1371px;top:194px;width:72px;height:18px;"></div>
<span class="t" style="left:1374px;top:194.25px;color:#8c8c8c;">411</span>
<span class="t" style="left:1447px;top:174.25px;color:#8a8a8a;">Pos Y</span>
<div class="dfld" style="left:1447px;top:194px;width:72px;height:18px;"></div>
<span class="t" style="left:1450px;top:194.25px;color:#8c8c8c;">230.75</span>
<span class="t" style="left:1523px;top:174.25px;color:#8a8a8a;">Pos Z</span>
<div class="dfld" style="left:1523px;top:194px;width:72px;height:18px;"></div>
<span class="t" style="left:1526px;top:194.25px;color:#8c8c8c;">0</span>
<span class="t" style="left:1371px;top:214.25px;color:#8a8a8a;">Width</span>
<div class="dfld" style="left:1371px;top:234px;width:72px;height:18px;"></div>
<span class="t" style="left:1374px;top:234.25px;color:#8c8c8c;">822</span>
<span class="t" style="left:1447px;top:214.25px;color:#8a8a8a;">Height</span>
<div class="dfld" style="left:1447px;top:234px;width:72px;height:18px;"></div>
<span class="t" style="left:1450px;top:234.25px;color:#8c8c8c;">461.5</span>
<div style="left:1539px;top:232px;width:27px;height:20.5px;background:#585858;border-radius:3px 0 0 3px;border:1px solid #303030"></div>
<div style="left:1566px;top:232px;width:29.5px;height:20.5px;background:#585858;border-radius:0 3px 3px 0;border:1px solid #303030;border-left:none"></div>
<div style="left:1546.5px;top:237px;width:11.5px;height:11.5px;border:1.3px dashed #9a9a9a"></div>
<span class="t" style="left:1575.5px;top:232.75px;color:#9a9a9a;font-size:12.5px;">R</span>
<svg style="left:1226px;top:261px;" width="8" height="9.5" viewBox="0 0 8 9.5"><path fill="#6f6f6f" d="M0 0 L8 4.75 L0 9.5 Z"/></svg>
<span class="t" style="left:1238.5px;top:256.25px;color:#c8c8c8;">Anchors</span>
<span class="t" style="left:1238.5px;top:278.55px;color:#c8c8c8;">Pivot</span>
<span class="t" style="left:1371.5px;top:278.55px;color:#8a8a8a;">X</span>
<div class="dfld" style="left:1383px;top:279.3px;width:60px;height:18px;"></div>
<span class="t" style="left:1386px;top:279.55px;color:#8c8c8c;">0.5</span>
<span class="t" style="left:1448px;top:278.55px;color:#8a8a8a;">Y</span>
<div class="dfld" style="left:1460px;top:279.3px;width:59.5px;height:18px;"></div>
<span class="t" style="left:1463px;top:279.55px;color:#8c8c8c;">0.5</span>
<span class="t" style="left:1238.5px;top:309.55px;color:#c8c8c8;">Rotation</span>
<span class="t" style="left:1374.5px;top:309.55px;color:#8a8a8a;">X</span>
<div class="dfld" style="left:1390px;top:310.3px;width:53.5px;height:18px;"></div>
<span class="t" style="left:1393px;top:310.55px;color:#8c8c8c;">0</span>
<span class="t" style="left:1450px;top:309.55px;color:#8a8a8a;">Y</span>
<div class="dfld" style="left:1466px;top:310.3px;width:53.5px;height:18px;"></div>
<span class="t" style="left:1469px;top:310.55px;color:#8c8c8c;">0</span>
<span class="t" style="left:1526px;top:309.55px;color:#8a8a8a;">Z</span>
<div class="dfld" style="left:1541.5px;top:310.3px;width:54px;height:18px;"></div>
<span class="t" style="left:1544.5px;top:310.55px;color:#8c8c8c;">0</span>
<span class="t" style="left:1238.5px;top:331.55px;color:#c8c8c8;">Scale</span>
<span class="t" style="left:1374.5px;top:331.55px;color:#8a8a8a;">X</span>
<div class="dfld" style="left:1390px;top:332.3px;width:53.5px;height:18px;"></div>
<span class="t" style="left:1393px;top:332.55px;color:#8c8c8c;">1</span>
<span class="t" style="left:1450px;top:331.55px;color:#8a8a8a;">Y</span>
<div class="dfld" style="left:1466px;top:332.3px;width:53.5px;height:18px;"></div>
<span class="t" style="left:1469px;top:332.55px;color:#8c8c8c;">1</span>
<span class="t" style="left:1526px;top:331.55px;color:#8a8a8a;">Z</span>
<div class="dfld" style="left:1541.5px;top:332.3px;width:54px;height:18px;"></div>
<span class="t" style="left:1544.5px;top:332.55px;color:#8c8c8c;">1</span>
<div style="left:1218px;top:361.0px;width:382px;height:1px;background:#1f1f1f;"></div>
<div style="left:1218px;top:362.0px;width:382px;height:23px;background:#3e3e3e;"></div>
<svg style="left:1224px;top:369.5px;" width="10" height="8.5" viewBox="0 0 10 8.5"><path fill="#6f6f6f" d="M0 0 H10 L5.0 8.5 Z"/></svg>
<svg style="left:1241px;top:366.5px;" width="16" height="14.5" viewBox="0 0 16 14.5"><rect x="2.2" y="2.2" width="11.6" height="10" fill="none" stroke="#dcdcdc" stroke-width="1.5"/><rect x="4.6" y="4.6" width="6.8" height="5.2" fill="#8a8a8a"/><g fill="#dcdcdc"><rect x="0" y="0" width="3.4" height="3.4"/><rect x="12.6" y="0" width="3.4" height="3.4"/><rect x="0" y="11" width="3.4" height="3.4"/><rect x="12.6" y="11" width="3.4" height="3.4"/></g></svg>
<div class="cb" style="left:1262px;top:366.0px;width:15px;height:15px;"></div>
<svg style="left:1264px;top:368.0px;" width="11" height="11" viewBox="0 0 11 11"><path fill="none" stroke="#e8e8e8" stroke-width="1.7" stroke-linecap="round" stroke-linejoin="round" d="M2 6 L4.6 8.6 L9.4 2.8"/></svg>
<span class="t" style="left:1284px;top:363.75px;color:#ececec;font-size:13.8px;font-weight:700;letter-spacing:0">Canvas</span>
<svg style="left:1535.5px;top:367.5px;" width="12" height="12" viewBox="0 0 12 12"><circle cx="6" cy="6" r="5.7" fill="#d2d2d2"/><path fill="none" stroke="#383838" stroke-width="1.5" stroke-linecap="round" d="M4.2 4.6 Q4.2 2.9 6 2.9 Q7.8 2.9 7.8 4.5 Q7.8 5.6 6 6.3 V7.2"/><circle cx="6" cy="9.1" r="0.95" fill="#383838"/></svg>
<svg style="left:1557.5px;top:367.5px;" width="13" height="12.5" viewBox="0 0 13 12.5"><g stroke="#d2d2d2" stroke-width="1.4" fill="none"><path d="M0.5 3.2 H7 M9.5 3.2 H12.5 M0.5 9.2 H3 M5.5 9.2 H12.5"/><path d="M8.2 0.6 V5.8 M4.2 6.6 V11.8" stroke-width="1.6"/></g></svg>
<svg style="left:1583.5px;top:367.3px;" width="5" height="12.2" viewBox="0 0 5 12.2"><circle cx="2.5" cy="2.0" r="1.45" fill="#d2d2d2"/><circle cx="2.5" cy="6.1" r="1.45" fill="#d2d2d2"/><circle cx="2.5" cy="10.2" r="1.45" fill="#d2d2d2"/></svg>
<span class="t" style="left:1238.5px;top:390.55px;color:#c8c8c8;">Render Mode</span>
<div class="dd" style="left:1374px;top:391.3px;width:221.5px;height:18px;"></div>
<span class="t" style="left:1378px;top:390.75px;color:#e4e4e4;">Screen Space - Overlay</span>
<svg style="left:1581.0px;top:397.8px;" width="9" height="5.5" viewBox="0 0 9 5.5"><path fill="#d8d8d8" d="M0 0 H9 L4.5 5.5 Z"/></svg>
<span class="t" style="left:1255.5px;top:412.75px;color:#c8c8c8;">Pixel Perfect</span>
<div class="cb" style="left:1374px;top:415px;width:15px;height:15px;"></div>
<span class="t" style="left:1255.5px;top:435.65px;color:#c8c8c8;">Sort Order</span>
<div class="fld" style="left:1374px;top:435.8px;width:221.5px;height:18px;"></div>
<span class="t" style="left:1377px;top:435.25px;color:#e4e4e4;">0</span>
<span class="t" style="left:1255.5px;top:457.75px;color:#c8c8c8;">Target Display</span>
<div class="dd" style="left:1374px;top:458px;width:221.5px;height:18px;"></div>
<span class="t" style="left:1378px;top:457.45px;color:#e4e4e4;">Display 1</span>
<svg style="left:1581.0px;top:464.5px;" width="9" height="5.5" viewBox="0 0 9 5.5"><path fill="#d8d8d8" d="M0 0 H9 L4.5 5.5 Z"/></svg>
<div style="left:1238.5px;top:479px;width:133px;height:20px;overflow:hidden"><span class="t" style="left:0px;top:1.1500000000000004px;color:#c8c8c8;">Additional Shader Channels</span>
</div>
<div class="dd" style="left:1374px;top:480.2px;width:221.5px;height:18px;"></div>
<span class="t" style="left:1378px;top:479.65px;color:#e4e4e4;">Nothing</span>
<svg style="left:1581.0px;top:486.7px;" width="9" height="5.5" viewBox="0 0 9 5.5"><path fill="#d8d8d8" d="M0 0 H9 L4.5 5.5 Z"/></svg>
<div style="left:1238.5px;top:501px;width:133.5px;height:20px;overflow:hidden"><span class="t" style="left:0px;top:0.5500000000000007px;color:#c8c8c8;">Vertex Color Always In Gamma</span>
</div>
<div class="cb" style="left:1374px;top:504px;width:15px;height:15px;"></div>
<div style="left:1238px;top:525px;width:357px;height:44.5px;background:#353535;border:1px solid #2a2a2a;border-radius:3px"></div>
<svg style="left:1242.5px;top:529.5px;" width="32" height="32" viewBox="0 0 32 32"><path d="M16 2.5 Q17.2 2.5 17.9 3.8 L30.4 27 Q31.4 29.5 28.8 29.5 H3.2 Q0.6 29.5 1.6 27 L14.1 3.8 Q14.8 2.5 16 2.5Z" fill="#ffc107"/><rect x="14.5" y="10" width="3" height="11.5" rx="1.3" fill="#2a2a2a"/><circle cx="16" cy="25" r="1.9" fill="#2a2a2a"/></svg>
<span class="t" style="left:1278.5px;top:524.05px;color:#bdbdbd;font-size:11.3px;letter-spacing:.28px">Keep vertex color in Gamma space to allow gamma to</span>
<span class="t" style="left:1278.5px;top:537.25px;color:#bdbdbd;font-size:11.3px;letter-spacing:.28px">linear color space conversion to happen in UI shaders.</span>
<span class="t" style="left:1278.5px;top:550.4499999999999px;color:#bdbdbd;font-size:11.3px;letter-spacing:.28px">This will enhance UI color precision in linear color space.</span>
<div style="left:1218px;top:580.0px;width:382px;height:1px;background:#1f1f1f;"></div>
<div style="left:1218px;top:581.0px;width:382px;height:23px;background:#3e3e3e;"></div>
<svg style="left:1224px;top:588.5px;" width="10" height="8.5" viewBox="0 0 10 8.5"><path fill="#6f6f6f" d="M0 0 H10 L5.0 8.5 Z"/></svg>
<svg style="left:1241px;top:585.5px;" width="16" height="14.5" viewBox="0 0 16 14.5"><rect x="0.8" y="0.8" width="14.4" height="12.6" fill="none" stroke="#b4b4b4" stroke-width="1.4"/><rect x="2.6" y="6.5" width="4.6" height="5" fill="#9a9a9a"/><rect x="6" y="2.6" width="7.4" height="7" fill="#e8e8e8"/></svg>
<div class="cb" style="left:1262px;top:585.0px;width:15px;height:15px;"></div>
<svg style="left:1264px;top:587.0px;" width="11" height="11" viewBox="0 0 11 11"><path fill="none" stroke="#e8e8e8" stroke-width="1.7" stroke-linecap="round" stroke-linejoin="round" d="M2 6 L4.6 8.6 L9.4 2.8"/></svg>
<span class="t" style="left:1284px;top:582.75px;color:#ececec;font-size:13.8px;font-weight:700;letter-spacing:0">Canvas Scaler</span>
<svg style="left:1535.5px;top:586.5px;" width="12" height="12" viewBox="0 0 12 12"><circle cx="6" cy="6" r="5.7" fill="#d2d2d2"/><path fill="none" stroke="#383838" stroke-width="1.5" stroke-linecap="round" d="M4.2 4.6 Q4.2 2.9 6 2.9 Q7.8 2.9 7.8 4.5 Q7.8 5.6 6 6.3 V7.2"/><circle cx="6" cy="9.1" r="0.95" fill="#383838"/></svg>
<svg style="left:1557.5px;top:586.5px;" width="13" height="12.5" viewBox="0 0 13 12.5"><g stroke="#d2d2d2" stroke-width="1.4" fill="none"><path d="M0.5 3.2 H7 M9.5 3.2 H12.5 M0.5 9.2 H3 M5.5 9.2 H12.5"/><path d="M8.2 0.6 V5.8 M4.2 6.6 V11.8" stroke-width="1.6"/></g></svg>
<svg style="left:1583.5px;top:586.3px;" width="5" height="12.2" viewBox="0 0 5 12.2"><circle cx="2.5" cy="2.0" r="1.45" fill="#d2d2d2"/><circle cx="2.5" cy="6.1" r="1.45" fill="#d2d2d2"/><circle cx="2.5" cy="10.2" r="1.45" fill="#d2d2d2"/></svg>
<span class="t" style="left:1238.5px;top:609.55px;color:#c8c8c8;">UI Scale Mode</span>
<div class="dd" style="left:1374px;top:610.3px;width:221.5px;height:18px;"></div>
<span class="t" style="left:1378px;top:609.75px;color:#e4e4e4;">Constant Pixel Size</span>
<svg style="left:1581.0px;top:616.8px;" width="9" height="5.5" viewBox="0 0 9 5.5"><path fill="#d8d8d8" d="M0 0 H9 L4.5 5.5 Z"/></svg>
<span class="t" style="left:1238.5px;top:640.45px;color:#c8c8c8;">Scale Factor</span>
<div class="fld" style="left:1374px;top:641.2px;width:221.5px;height:18px;"></div>
<span class="t" style="left:1377px;top:640.6500000000001px;color:#e4e4e4;">1</span>
<div style="left:1238.5px;top:662.5px;width:133px;height:20px;overflow:hidden"><span class="t" style="left:0px;top:0.25px;color:#c8c8c8;">Reference Pixels Per Unit</span>
</div>
<div class="fld" style="left:1374px;top:663.5px;width:221.5px;height:18px;"></div>
<span class="t" style="left:1377px;top:662.95px;color:#e4e4e4;">100</span>
<div style="left:1218px;top:692.0px;width:382px;height:1px;background:#1f1f1f;"></div>
<div style="left:1218px;top:693.0px;width:382px;height:23px;background:#3e3e3e;"></div>
<svg style="left:1224px;top:700.5px;" width="10" height="8.5" viewBox="0 0 10 8.5"><path fill="#6f6f6f" d="M0 0 H10 L5.0 8.5 Z"/></svg>
<svg style="left:1241.5px;top:697.5px;" width="15" height="15" viewBox="0 0 15 15"><g fill="none" stroke="#dcdcdc" stroke-width="1.4"><rect x="3.2" y="3.2" width="8" height="7.6"/><path d="M0.5 3.2 H3.2 V0.5 M11.2 0.5 V3.2 H14 M0.5 10.8 H3.2 V13.5 M11.2 13.5 V10.8 H14"/></g><circle cx="13.6" cy="13.4" r="1" fill="#3fc9a8"/></svg>
<div class="cb" style="left:1262px;top:697.0px;width:15px;height:15px;"></div>
<svg style="left:1264px;top:699.0px;" width="11" height="11" viewBox="0 0 11 11"><path fill="none" stroke="#e8e8e8" stroke-width="1.7" stroke-linecap="round" stroke-linejoin="round" d="M2 6 L4.6 8.6 L9.4 2.8"/></svg>
<span class="t" style="left:1284px;top:694.75px;color:#ececec;font-size:13.8px;font-weight:700;letter-spacing:0">Graphic Raycaster</span>
<svg style="left:1535.5px;top:698.5px;" width="12" height="12" viewBox="0 0 12 12"><circle cx="6" cy="6" r="5.7" fill="#d2d2d2"/><path fill="none" stroke="#383838" stroke-width="1.5" stroke-linecap="round" d="M4.2 4.6 Q4.2 2.9 6 2.9 Q7.8 2.9 7.8 4.5 Q7.8 5.6 6 6.3 V7.2"/><circle cx="6" cy="9.1" r="0.95" fill="#383838"/></svg>
<svg style="left:1557.5px;top:698.5px;" width="13" height="12.5" viewBox="0 0 13 12.5"><g stroke="#d2d2d2" stroke-width="1.4" fill="none"><path d="M0.5 3.2 H7 M9.5 3.2 H12.5 M0.5 9.2 H3 M5.5 9.2 H12.5"/><path d="M8.2 0.6 V5.8 M4.2 6.6 V11.8" stroke-width="1.6"/></g></svg>
<svg style="left:1583.5px;top:698.3px;" width="5" height="12.2" viewBox="0 0 5 12.2"><circle cx="2.5" cy="2.0" r="1.45" fill="#d2d2d2"/><circle cx="2.5" cy="6.1" r="1.45" fill="#d2d2d2"/><circle cx="2.5" cy="10.2" r="1.45" fill="#d2d2d2"/></svg>
<span class="t" style="left:1238.5px;top:720.55px;color:#7a7a7a;">Script</span>
<div class="dfld" style="left:1374px;top:721.3px;width:221.5px;height:18px;"></div>
<svg style="left:1378px;top:724.5px;" width="11" height="11" viewBox="0 0 15 15"><g fill="none" stroke="#7a7a7a" stroke-width="1.4"><rect x="3.2" y="3.2" width="8" height="7.6"/><path d="M0.5 3.2 H3.2 V0.5 M11.2 0.5 V3.2 H14 M0.5 10.8 H3.2 V13.5 M11.2 13.5 V10.8 H14"/></g><circle cx="13.6" cy="13.4" r="1" fill="#3fc9a8"/></svg>
<span class="t" style="left:1392px;top:720.75px;color:#808080;">GraphicRaycaster</span>
<svg style="left:1579px;top:724.5px;" width="12" height="12" viewBox="0 0 12 12"><circle cx="6" cy="6" r="4.9" fill="none" stroke="#9a9a9a" stroke-width="1.2"/><circle cx="6" cy="6" r="1.9" fill="#9a9a9a"/></svg>
<span class="t" style="left:1238.5px;top:741.05px;color:#c8c8c8;">Ignore Reversed G...</span>
<div class="cb" style="left:1374px;top:743.5px;width:15px;height:15px;"></div>
<svg style="left:1376px;top:745.5px;" width="11" height="11" viewBox="0 0 11 11"><path fill="none" stroke="#e8e8e8" stroke-width="1.7" stroke-linecap="round" stroke-linejoin="round" d="M2 6 L4.6 8.6 L9.4 2.8"/></svg>
<span class="t" style="left:1238.5px;top:764.25px;color:#c8c8c8;">Blocking Objects</span>
<div class="dd" style="left:1374px;top:765px;width:221.5px;height:18px;"></div>
<span class="t" style="left:1378px;top:764.45px;color:#e4e4e4;">None</span>
<svg style="left:1581.0px;top:771.5px;" width="9" height="5.5" viewBox="0 0 9 5.5"><path fill="#d8d8d8" d="M0 0 H9 L4.5 5.5 Z"/></svg>
<span class="t" style="left:1238.5px;top:787.45px;color:#c8c8c8;">Blocking Mask</span>
<div class="dd" style="left:1374px;top:788.2px;width:221.5px;height:18px;"></div>
<span class="t" style="left:1378px;top:787.6500000000001px;color:#e4e4e4;">Everything</span>
<svg style="left:1581.0px;top:794.7px;" width="9" height="5.5" viewBox="0 0 9 5.5"><path fill="#d8d8d8" d="M0 0 H9 L4.5 5.5 Z"/></svg>
<div style="left:1218px;top:817px;width:382px;height:1px;background:#1f1f1f;"></div>
<div class="btn" style="left:1282px;top:828px;width:253.5px;height:24.5px;"></div>
<span class="t" style="left:1359px;top:830.55px;color:#e4e4e4;">Add Component</span>
<div style="left:0px;top:593px;width:1216px;height:383px;background:#383838;"></div>
<div style="left:0px;top:593px;width:1216px;height:21.5px;background:#282828;"></div>
<div style="left:0px;top:593px;width:89px;height:21.5px;background:#3c3c3c;border-radius:3px 3px 0 0"></div>
<svg style="left:8px;top:598px;" width="13.5" height="11.5" viewBox="0 0 13.5 11.5"><path fill="#d2d2d2" d="M1 0 H5.6 L7.4 2.2 H12.5 Q13.5 2.2 13.5 3.2 V10.5 Q13.5 11.5 12.5 11.5 H1 Q0 11.5 0 10.5 V1 Q0 0 1 0Z"/></svg>
<span class="t" style="left:25.5px;top:594.55px;">Project</span>
<svg style="left:100px;top:598px;" width="11.5" height="12" viewBox="0 0 11.5 12"><rect x="0" y="0" width="11.5" height="12" rx="1.3" fill="#d2d2d2"/><path d="M2 3.2 H9.5 M2 6 H7.5 M2 8.8 H9.5" stroke="#282828" stroke-width="1.3"/></svg>
<span class="t" style="left:117px;top:594.55px;">Console</span>
<svg style="left:1176px;top:597.5px;" width="11" height="13" viewBox="0 0 11 13"><path fill="none" stroke="#d2d2d2" stroke-width="1.3" d="M3 6.5 V4 Q3 1.5 5.5 1.5 Q8 1.5 8 4"/><rect x="1.6" y="6.6" width="7.8" height="5.2" rx="0.8" fill="none" stroke="#d2d2d2" stroke-width="1.3"/></svg>
<svg style="left:1198.8px;top:597.8px;" width="5" height="12.2" viewBox="0 0 5 12.2"><circle cx="2.5" cy="2.0" r="1.45" fill="#d2d2d2"/><circle cx="2.5" cy="6.1" r="1.45" fill="#d2d2d2"/><circle cx="2.5" cy="10.2" r="1.45" fill="#d2d2d2"/></svg>
<div style="left:0px;top:614.5px;width:1216px;height:22px;background:#3c3c3c;"></div>
<div style="left:0px;top:636.5px;width:1216px;height:1px;background:#2a2a2a;"></div>
<svg style="left:8px;top:619px;" width="13" height="13" viewBox="0 0 13 13"><path d="M6.5 0 V13 M0 6.5 H13" stroke="#8e8e8e" stroke-width="2.2"/></svg>
<svg style="left:26px;top:623px;" width="8.5" height="5" viewBox="0 0 8.5 5"><path fill="#767676" d="M0 0 H8.5 L4.25 5 Z"/></svg>
<div class="fld" style="left:699px;top:616.5px;width:354.5px;height:17.5px;"></div>
<svg style="left:704.5px;top:621.5px;" width="9" height="9" viewBox="0 0 9 9"><g fill="none" stroke="#c4c4c4" stroke-width="1.5"><circle cx="3.3" cy="3.3" r="2.4"/><path d="M5.2 5.2 L8 8"/></g></svg>
<svg style="left:1036px;top:618.5px;" width="14" height="14" viewBox="0 0 14 14"><g fill="none" stroke="#c4c4c4" stroke-width="1.3"><path d="M4.5 3.8 V1.8 Q4.5 0.8 5.5 0.8 H12.2 Q13.2 0.8 13.2 1.8 V8.5 Q13.2 9.5 12.2 9.5 H10"/><rect x="0.7" y="8" width="4.8" height="4.8"/><path d="M5.5 8 L10.3 3.4 M6.8 3.2 H10.5 V6.8"/></g></svg>
<div style="left:1056px;top:615px;width:1px;height:21px;background:#303030;"></div>
<div style="left:1085px;top:615px;width:1px;height:21px;background:#303030;"></div>
<div style="left:1114px;top:615px;width:1px;height:21px;background:#303030;"></div>
<div style="left:1142.5px;top:615px;width:1px;height:21px;background:#303030;"></div>
<div style="left:1171px;top:615px;width:1px;height:21px;background:#303030;"></div>
<svg style="left:1062.5px;top:617.5px;" width="14" height="15" viewBox="0 0 14 15"><g fill="#d2d2d2"><rect x="2" y="0.5" width="6" height="5.4"/><circle cx="4.4" cy="10.8" r="3.8"/><path d="M10.2 4.4 L13.8 10.6 H7.6Z"/></g></svg>
<svg style="left:1091.5px;top:619px;transform:rotate(0deg)" width="13" height="13" viewBox="0 0 13 13"><path fill="#d2d2d2" d="M6.6 0.6 L12 0.6 Q12.6 0.6 12.6 1.2 V6.4 L6.2 12.6 L0.4 6.8Z"/><circle cx="9.8" cy="3.4" r="1.1" fill="#3c3c3c"/></svg>
<svg style="left:1119.5px;top:617.5px;" width="15" height="15" viewBox="0 0 15 15"><circle cx="7.5" cy="7.5" r="7.3" fill="#e0e0e0"/><rect x="6.5" y="3" width="2" height="6" rx=".8" fill="#3c3c3c"/><circle cx="7.5" cy="11.3" r="1.2" fill="#3c3c3c"/></svg>
<svg style="left:1149.5px;top:618.5px;" width="13" height="13" viewBox="0 0 13 13"><path fill="#8a8a8a" d="M6.5 0.3 L8.3 4.5 L12.8 4.9 L9.4 7.9 L10.4 12.4 L6.5 10 L2.6 12.4 L3.6 7.9 L0.2 4.9 L4.7 4.5Z"/></svg>
<svg style="left:1177px;top:620px;" width="17" height="11" viewBox="0 0 17 11"><path d="M0.8 5.5 Q8.5 -2.4 16.2 5.5 Q8.5 13.4 0.8 5.5Z" fill="#6c6c6c"/><circle cx="8.5" cy="5.5" r="2.6" fill="#3c3c3c"/><circle cx="8.5" cy="5.5" r="1.3" fill="#6c6c6c"/></svg>
<span class="t" style="left:1195px;top:615.55px;color:#b4b4b4;font-size:14.5px;letter-spacing:0">16</span>
<div style="left:0px;top:637.5px;width:230px;height:338.5px;background:#383838;"></div>
<div style="left:230px;top:637.5px;width:1px;height:338.5px;background:#232323;"></div>
<div style="left:0px;top:958.7px;width:216.5px;height:17.3px;background:#4d4d4d;"></div>
<svg style="left:21.5px;top:642.3px;" width="8" height="9.5" viewBox="0 0 8 9.5"><path fill="#6f6f6f" d="M0 0 L8 4.75 L0 9.5 Z"/></svg>
<svg style="left:35.0px;top:640.3px;" width="14" height="13" viewBox="0 0 14 13"><path fill="#c4c4c4" d="M1 1 H5.5 L7 3 H13 Q14 3 14 4 V11.5 Q14 12.5 13 12.5 H1 Q0 12.5 0 11.5 V2 Q0 1 1 1 Z"/></svg>
<span class="t" style="left:53.5px;top:637.05px;color:#cdcdcd;">Profile Analyzer</span>
<svg style="left:21.5px;top:660.0799999999999px;" width="8" height="9.5" viewBox="0 0 8 9.5"><path fill="#6f6f6f" d="M0 0 L8 4.75 L0 9.5 Z"/></svg>
<svg style="left:35.0px;top:658.0799999999999px;" width="14" height="13" viewBox="0 0 14 13"><path fill="#c4c4c4" d="M1 1 H5.5 L7 3 H13 Q14 3 14 4 V11.5 Q14 12.5 13 12.5 H1 Q0 12.5 0 11.5 V2 Q0 1 1 1 Z"/></svg>
<span class="t" style="left:53.5px;top:654.8299999999999px;color:#cdcdcd;">Settings Manager</span>
<svg style="left:21.5px;top:677.8599999999999px;" width="8" height="9.5" viewBox="0 0 8 9.5"><path fill="#6f6f6f" d="M0 0 L8 4.75 L0 9.5 Z"/></svg>
<svg style="left:35.0px;top:675.8599999999999px;" width="14" height="13" viewBox="0 0 14 13"><path fill="#c4c4c4" d="M1 1 H5.5 L7 3 H13 Q14 3 14 4 V11.5 Q14 12.5 13 12.5 H1 Q0 12.5 0 11.5 V2 Q0 1 1 1 Z"/></svg>
<span class="t" style="left:53.5px;top:672.6099999999999px;color:#cdcdcd;">Test Framework</span>
<svg style="left:21.5px;top:695.64px;" width="8" height="9.5" viewBox="0 0 8 9.5"><path fill="#6f6f6f" d="M0 0 L8 4.75 L0 9.5 Z"/></svg>
<svg style="left:35.0px;top:693.64px;" width="14" height="13" viewBox="0 0 14 13"><path fill="#c4c4c4" d="M1 1 H5.5 L7 3 H13 Q14 3 14 4 V11.5 Q14 12.5 13 12.5 H1 Q0 12.5 0 11.5 V2 Q0 1 1 1 Z"/></svg>
<span class="t" style="left:53.5px;top:690.39px;color:#cdcdcd;">TextMeshPro</span>
<svg style="left:21.5px;top:713.42px;" width="8" height="9.5" viewBox="0 0 8 9.5"><path fill="#6f6f6f" d="M0 0 L8 4.75 L0 9.5 Z"/></svg>
<svg style="left:35.0px;top:711.42px;" width="14" height="13" viewBox="0 0 14 13"><path fill="#c4c4c4" d="M1 1 H5.5 L7 3 H13 Q14 3 14 4 V11.5 Q14 12.5 13 12.5 H1 Q0 12.5 0 11.5 V2 Q0 1 1 1 Z"/></svg>
<span class="t" style="left:53.5px;top:708.17px;color:#cdcdcd;">Timeline</span>
<svg style="left:21.5px;top:731.1999999999999px;" width="8" height="9.5" viewBox="0 0 8 9.5"><path fill="#6f6f6f" d="M0 0 L8 4.75 L0 9.5 Z"/></svg>
<svg style="left:35.0px;top:729.1999999999999px;" width="14" height="13" viewBox="0 0 14 13"><path fill="#c4c4c4" d="M1 1 H5.5 L7 3 H13 Q14 3 14 4 V11.5 Q14 12.5 13 12.5 H1 Q0 12.5 0 11.5 V2 Q0 1 1 1 Z"/></svg>
<span class="t" style="left:53.5px;top:725.9499999999999px;color:#cdcdcd;">Unity UI</span>
<svg style="left:21.5px;top:748.98px;" width="8" height="9.5" viewBox="0 0 8 9.5"><path fill="#6f6f6f" d="M0 0 L8 4.75 L0 9.5 Z"/></svg>
<svg style="left:35.0px;top:746.98px;" width="14" height="13" viewBox="0 0 14 13"><path fill="#c4c4c4" d="M1 1 H5.5 L7 3 H13 Q14 3 14 4 V11.5 Q14 12.5 13 12.5 H1 Q0 12.5 0 11.5 V2 Q0 1 1 1 Z"/></svg>
<span class="t" style="left:53.5px;top:743.73px;color:#cdcdcd;">Version Control</span>
<svg style="left:21.5px;top:766.76px;" width="8" height="9.5" viewBox="0 0 8 9.5"><path fill="#6f6f6f" d="M0 0 L8 4.75 L0 9.5 Z"/></svg>
<svg style="left:35.0px;top:764.76px;" width="14" height="13" viewBox="0 0 14 13"><path fill="#c4c4c4" d="M1 1 H5.5 L7 3 H13 Q14 3 14 4 V11.5 Q14 12.5 13 12.5 H1 Q0 12.5 0 11.5 V2 Q0 1 1 1 Z"/></svg>
<span class="t" style="left:53.5px;top:761.51px;color:#cdcdcd;">Visual Scripting</span>
<svg style="left:21.5px;top:784.54px;" width="8" height="9.5" viewBox="0 0 8 9.5"><path fill="#6f6f6f" d="M0 0 L8 4.75 L0 9.5 Z"/></svg>
<svg style="left:35.0px;top:782.54px;" width="14" height="13" viewBox="0 0 14 13"><path fill="#c4c4c4" d="M1 1 H5.5 L7 3 H13 Q14 3 14 4 V11.5 Q14 12.5 13 12.5 H1 Q0 12.5 0 11.5 V2 Q0 1 1 1 Z"/></svg>
<span class="t" style="left:53.5px;top:779.29px;color:#cdcdcd;">Visual Studio Code Editor</span>
<svg style="left:21.5px;top:802.3199999999999px;" width="8" height="9.5" viewBox="0 0 8 9.5"><path fill="#6f6f6f" d="M0 0 L8 4.75 L0 9.5 Z"/></svg>
<svg style="left:35.0px;top:800.3199999999999px;" width="14" height="13" viewBox="0 0 14 13"><path fill="#c4c4c4" d="M1 1 H5.5 L7 3 H13 Q14 3 14 4 V11.5 Q14 12.5 13 12.5 H1 Q0 12.5 0 11.5 V2 Q0 1 1 1 Z"/></svg>
<span class="t" style="left:53.5px;top:797.0699999999999px;color:#cdcdcd;">Visual Studio Editor</span>
<svg style="left:20.5px;top:820.5999999999999px;" width="10" height="8.5" viewBox="0 0 10 8.5"><path fill="#6f6f6f" d="M0 0 H10 L5.0 8.5 Z"/></svg>
<svg style="left:35.0px;top:818.3px;" width="16" height="13" viewBox="0 0 16 13"><path fill="none" stroke="#c4c4c4" stroke-width="1.2" d="M1 11.5 V2 Q1 1.5 1.5 1.5 H5 L6.5 3.5 H12 V5.5"/><path fill="#c4c4c4" d="M3.5 5.5 H15.5 L13 12.5 H0.8 Z"/></svg>
<span class="t" style="left:53.5px;top:814.8499999999999px;color:#cdcdcd;">web3.unity SDK</span>
<svg style="left:50.7px;top:835.88px;" width="14" height="13" viewBox="0 0 14 13"><path fill="#c4c4c4" d="M1 1 H5.5 L7 3 H13 Q14 3 14 4 V11.5 Q14 12.5 13 12.5 H1 Q0 12.5 0 11.5 V2 Q0 1 1 1 Z"/></svg>
<span class="t" style="left:69.2px;top:832.63px;color:#cdcdcd;">Documentation</span>
<svg style="left:37.2px;top:855.66px;" width="8" height="9.5" viewBox="0 0 8 9.5"><path fill="#6f6f6f" d="M0 0 L8 4.75 L0 9.5 Z"/></svg>
<svg style="left:50.7px;top:853.66px;" width="14" height="13" viewBox="0 0 14 13"><path fill="#c4c4c4" d="M1 1 H5.5 L7 3 H13 Q14 3 14 4 V11.5 Q14 12.5 13 12.5 H1 Q0 12.5 0 11.5 V2 Q0 1 1 1 Z"/></svg>
<span class="t" style="left:69.2px;top:850.41px;color:#cdcdcd;">Editor</span>
<svg style="left:36.2px;top:873.9399999999999px;" width="10" height="8.5" viewBox="0 0 10 8.5"><path fill="#6f6f6f" d="M0 0 H10 L5.0 8.5 Z"/></svg>
<svg style="left:50.7px;top:871.64px;" width="16" height="13" viewBox="0 0 16 13"><path fill="none" stroke="#c4c4c4" stroke-width="1.2" d="M1 11.5 V2 Q1 1.5 1.5 1.5 H5 L6.5 3.5 H12 V5.5"/><path fill="#c4c4c4" d="M3.5 5.5 H15.5 L13 12.5 H0.8 Z"/></svg>
<span class="t" style="left:69.2px;top:868.1899999999999px;color:#cdcdcd;">Runtime</span>
<svg style="left:66.4px;top:889.22px;" width="14" height="13" viewBox="0 0 14 13"><path fill="#c4c4c4" d="M1 1 H5.5 L7 3 H13 Q14 3 14 4 V11.5 Q14 12.5 13 12.5 H1 Q0 12.5 0 11.5 V2 Q0 1 1 1 Z"/></svg>
<span class="t" style="left:84.9px;top:885.97px;color:#cdcdcd;">Data</span>
<svg style="left:66.4px;top:907.0px;" width="14" height="13" viewBox="0 0 14 13"><path fill="#c4c4c4" d="M1 1 H5.5 L7 3 H13 Q14 3 14 4 V11.5 Q14 12.5 13 12.5 H1 Q0 12.5 0 11.5 V2 Q0 1 1 1 Z"/></svg>
<span class="t" style="left:84.9px;top:903.75px;color:#cdcdcd;">Fonts</span>
<svg style="left:66.4px;top:924.78px;" width="14" height="13" viewBox="0 0 14 13"><path fill="#c4c4c4" d="M1 1 H5.5 L7 3 H13 Q14 3 14 4 V11.5 Q14 12.5 13 12.5 H1 Q0 12.5 0 11.5 V2 Q0 1 1 1 Z"/></svg>
<span class="t" style="left:84.9px;top:921.53px;color:#cdcdcd;">Libraries</span>
<svg style="left:52.9px;top:944.56px;" width="8" height="9.5" viewBox="0 0 8 9.5"><path fill="#6f6f6f" d="M0 0 L8 4.75 L0 9.5 Z"/></svg>
<svg style="left:66.4px;top:942.56px;" width="14" height="13" viewBox="0 0 14 13"><path fill="#c4c4c4" d="M1 1 H5.5 L7 3 H13 Q14 3 14 4 V11.5 Q14 12.5 13 12.5 H1 Q0 12.5 0 11.5 V2 Q0 1 1 1 Z"/></svg>
<span class="t" style="left:84.9px;top:939.31px;color:#cdcdcd;">Plugins</span>
<svg style="left:52.9px;top:962.3399999999999px;" width="8" height="9.5" viewBox="0 0 8 9.5"><path fill="#6f6f6f" d="M0 0 L8 4.75 L0 9.5 Z"/></svg>
<svg style="left:66.4px;top:960.3399999999999px;" width="14" height="13" viewBox="0 0 14 13"><path fill="#c4c4c4" d="M1 1 H5.5 L7 3 H13 Q14 3 14 4 V11.5 Q14 12.5 13 12.5 H1 Q0 12.5 0 11.5 V2 Q0 1 1 1 Z"/></svg>
<span class="t" style="left:84.9px;top:957.0899999999999px;color:#cdcdcd;">Prefabs</span>
<svg style="left:218.5px;top:964.6px;" width="9" height="5.3" viewBox="0 0 9 5.3"><path fill="#d2d2d2" d="M0 0 H9 L4.5 5.3 Z"/></svg>
<div style="left:231px;top:637.5px;width:985px;height:23px;background:#3c3c3c;"></div>
<div style="left:231px;top:660.5px;width:985px;height:292.5px;background:#333333;"></div>
<div style="left:231px;top:952.5px;width:985px;height:23.5px;background:#3f3f3f;"></div>
<span class="t" style="left:436px;top:638.55px;color:#c4c4c4;">Runtime</span>
<svg style="left:497px;top:643.6px;" width="6.5" height="10" viewBox="0 0 6.5 10"><path fill="none" stroke="#8a8a8a" stroke-width="1.4" stroke-linecap="round" stroke-linejoin="round" d="M1.2 1.2 L5.3 5.0 L1.2 8.8"/></svg>
<span class="t" style="left:510px;top:638.55px;color:#d2d2d2;font-size:13.5px;font-weight:700;letter-spacing:.2px">Prefabs</span>
<svg style="left:570.5px;top:643.6px;" width="6.5" height="10" viewBox="0 0 6.5 10"><path fill="none" stroke="#8a8a8a" stroke-width="1.4" stroke-linecap="round" stroke-linejoin="round" d="M1.2 1.2 L5.3 5.0 L1.2 8.8"/></svg>
<svg style="left:420px;top:676px;" width="59.5" height="63" viewBox="0 0 60 64"><g fill="#7fd6fd"><path d="M30 0.5 L56.5 12.3 L30 26.5 L3.5 12.3 Z"/><path d="M0.5 16 L28 30 V63.4 L0.5 48.6 Z"/><path d="M59.5 16 L32 30 V63.4 L59.5 48.6 Z"/></g></svg>
<svg style="left:505px;top:676px;" width="59.5" height="63" viewBox="0 0 60 64"><g fill="#7fd6fd"><path d="M30 0.5 L56.5 12.3 L30 26.5 L3.5 12.3 Z"/><path d="M0.5 16 L28 30 V63.4 L0.5 48.6 Z"/><path d="M59.5 16 L32 30 V63.4 L59.5 48.6 Z"/></g></svg>
<svg style="left:594px;top:684.5px;" width="54.5" height="45.5" viewBox="0 0 54 45.5"><path fill="#c4c4c4" d="M2 0 H19 Q21.5 0 23 2.5 L26 8 H51 Q54 8 54 11 V42 Q54 45.5 51 45.5 H3 Q0 45.5 0 42 V2.5 Q0 0 2 0 Z"/></svg>
<svg style="left:674px;top:676px;" width="59.5" height="63" viewBox="0 0 60 64"><g stroke="#c8c8c8" stroke-width="5.1"><path d="M-6 30 L14 10 M-6 42.5 L24 12.5 M-6 55 L34 15 M-2 63.5 L38 23.5 M8 66 L40 34 M18 68.5 L40 46.5"/></g><g fill="#333333"><path d="M-1 -1 H41 V36.6 L28 30 L0.5 16 L-1 15.2 Z"/><path d="M-1 47.8 L0.5 48.6 L28 63.4 L41 70 H-1 Z"/><rect x="-1" y="0" width="1.5" height="64"/><rect x="28" y="0" width="13" height="64"/></g><g fill="#7fd6fd"><path d="M30 0.5 L56.5 12.3 L30 26.5 L3.5 12.3 Z"/><path d="M59.5 16 L32 30 V63.4 L59.5 48.6 Z"/></g></svg>
<svg style="left:759px;top:676px;" width="59.5" height="63" viewBox="0 0 60 64"><g fill="#7fd6fd"><path d="M30 0.5 L56.5 12.3 L30 26.5 L3.5 12.3 Z"/><path d="M0.5 16 L28 30 V63.4 L0.5 48.6 Z"/><path d="M59.5 16 L32 30 V63.4 L59.5 48.6 Z"/></g></svg>
<span class="t" style="left:385px;top:742px;width:100.5px;text-align:right;font-size:11.3px;letter-spacing:.15px;color:#c8c8c8">Metamask...</span>
<span class="t" style="left:486.5px;top:742px;width:100px;text-align:center;font-size:11.3px;letter-spacing:.15px;color:#c8c8c8">Row</span>
<span class="t" style="left:571.5px;top:742px;width:100px;text-align:center;font-size:11.3px;letter-spacing:.15px;color:#c8c8c8">Wallet Con...</span>
<span class="t" style="left:656px;top:742px;width:100px;text-align:center;font-size:11.3px;letter-spacing:.15px;color:#c8c8c8">WalletCon...</span>
<span class="t" style="left:740px;top:742px;width:100px;text-align:center;font-size:11.3px;letter-spacing:.15px;color:#c8c8c8">Web3Unity</span>
<div style="left:1136.5px;top:963px;width:61px;height:2px;background:#5c5c5c;border-radius:1px"></div>
<div style="left:1166px;top:958.2px;width:11.6px;height:11.6px;background:#a0a0a0;border-radius:50%"></div>
<div style="left:0px;top:976px;width:1600px;height:24px;background:#191919;"></div>
<svg style="left:1488.5px;top:980px;" width="18" height="18" viewBox="0 0 18 18"><g fill="#c8c8c8"><ellipse cx="9" cy="10.8" rx="4.9" ry="5.4"/><circle cx="9" cy="4.6" r="2.7"/></g><g stroke="#c8c8c8" stroke-width="1.7" fill="none" stroke-linecap="round"><path d="M5 8.5 L2.2 7 M4.4 11.5 H1.6 M5 14 L2.6 15.8 M13 8.5 L15.8 7 M13.6 11.5 H16.4 M13 14 L15.4 15.8 M6.4 2.6 L5 1 M11.6 2.6 L13 1"/></g><path d="M2 1.5 L16.5 17" stroke="#191919" stroke-width="2.8"/><path d="M2 1.5 L16.5 17" stroke="#c8c8c8" stroke-width="1.3"/></svg>
<svg style="left:1518.5px;top:980px;" width="18" height="18" viewBox="0 0 18 18"><g fill="#c8c8c8"><ellipse cx="9" cy="4.4" rx="6.8" ry="3.2"/><path d="M2.2 6.6 Q9 10.8 15.8 6.6 V9.4 Q9 13.6 2.2 9.4Z"/><path d="M2.2 11.4 Q9 15.6 15.8 11.4 V14 Q9 18.2 2.2 14Z"/></g><path d="M2 1.5 L16.5 17" stroke="#191919" stroke-width="2.8"/><path d="M2 1.5 L16.5 17" stroke="#c8c8c8" stroke-width="1.3"/></svg>
<svg style="left:1548px;top:980px;" width="18" height="18" viewBox="0 0 18 18"><g fill="none" stroke="#c8c8c8" stroke-width="1.9"><path d="M3.2 6 A6.6 6.6 0 0 1 14.8 6 M14.8 12 A6.6 6.6 0 0 1 3.2 12"/></g><g fill="#c8c8c8"><path d="M1.2 2.6 L5.6 6.8 L0.8 7.6Z M16.8 15.4 L12.4 11.2 L17.2 10.4Z"/><circle cx="9" cy="8.2" r="2.7"/><rect x="7.7" y="10.4" width="2.6" height="2.6"/></g><path d="M2 1.5 L16.5 17" stroke="#191919" stroke-width="2.8"/><path d="M2 1.5 L16.5 17" stroke="#c8c8c8" stroke-width="1.3"/></svg>
<svg style="left:1577px;top:980.5px;" width="17" height="17" viewBox="0 0 17 17"><circle cx="8.5" cy="8.5" r="7.2" fill="none" stroke="#d2d2d2" stroke-width="1.5"/><path d="M5 8.8 L7.6 11.4 L12 6" fill="none" stroke="#d2d2d2" stroke-width="1.8"/></svg>
<div style="left:167px;top:173px;width:282px;height:757px;background:radial-gradient(ellipse 120px 60px at 155px 525px,rgba(50,74,96,.45),rgba(50,74,96,0) 100%),linear-gradient(180deg,rgba(41,39,38,0) 0px,rgba(41,39,38,0) 395px,rgba(43,41,40,.85) 425px,#2b2928 450px,#2a2827 757px),linear-gradient(90deg,#2d2d2f 0px,#2f2e30 95px,rgba(47,46,48,.55) 160px,rgba(47,46,48,0) 235px),linear-gradient(180deg,#3e4965 0px,#3e4a66 95px,#46506a 140px,#4c525e 168px,#433f3d 196px,#3e3936 230px,#3c3734 417px);border-radius:7px;box-shadow:0 0 0 1px rgba(20,20,20,.7),inset 0 0 0 1px rgba(255,255,255,.14),0 5px 12px rgba(0,0,0,.26);overflow:hidden"><span class="m" style="left:15px;top:9px;">Cut</span>
<span class="m" style="left:15px;top:33.30000000000001px;">Copy</span>
<span class="m" style="left:15px;top:57.69999999999999px;">Paste</span>
<div style="left:6px;top:80px;width:270px;height:24px;background:linear-gradient(90deg,#b531b9,#c840c4 40%,#cf48ce);border-radius:5px"></div>
<span class="m" style="left:15px;top:82px;color:#fff;-webkit-text-stroke-color:#fff;">Paste As Child</span>
<div style="left:15px;top:110.5px;width:252px;height:1px;background:rgba(255,255,255,.13);"></div>
<span class="m" style="left:15px;top:118.69999999999999px;">Rename</span>
<span class="m" style="left:15px;top:143px;">Duplicate</span>
<span class="m" style="left:15px;top:167.5px;">Delete</span>
<div style="left:15px;top:195.7px;width:252px;height:1px;background:rgba(255,255,255,.13);"></div>
<span class="m" style="left:15px;top:204.2px;">Select Children</span>
<div style="left:15px;top:232.3px;width:252px;height:1px;background:rgba(255,255,255,.13);"></div>
<span class="m" style="left:15px;top:240.8px;">Find References in Scene</span>
<div style="left:15px;top:269px;width:252px;height:1px;background:rgba(255,255,255,.13);"></div>
<span class="m" style="left:15px;top:277.5px;">Set as Default Parent</span>
<div style="left:15px;top:305.7px;width:252px;height:1px;background:rgba(255,255,255,.13);"></div>
<span class="m" style="left:15px;top:314px;">Prefab</span>
<svg style="left:257.5px;top:318.5px;" width="7" height="11.5" viewBox="0 0 7 11.5"><path fill="none" stroke="#e6e6e6" stroke-width="1.9" stroke-linecap="round" stroke-linejoin="round" d="M1.2 1.2 L5.8 5.75 L1.2 10.3"/></svg>
<div style="left:15px;top:342.29999999999995px;width:252px;height:1px;background:rgba(255,255,255,.13);"></div>
<span class="m" style="left:15px;top:350.79999999999995px;">Create Empty</span>
<span class="m" style="left:15px;top:375.2299999999999px;">Create Empty Parent</span>
<span class="m" style="left:15px;top:399.65999999999997px;">3D Object</span>
<svg style="left:257.5px;top:404.15999999999997px;" width="7" height="11.5" viewBox="0 0 7 11.5"><path fill="none" stroke="#e6e6e6" stroke-width="1.9" stroke-linecap="round" stroke-linejoin="round" d="M1.2 1.2 L5.8 5.75 L1.2 10.3"/></svg>
<span class="m" style="left:15px;top:424.0899999999999px;">Effects</span>
<svg style="left:257.5px;top:428.5899999999999px;" width="7" height="11.5" viewBox="0 0 7 11.5"><path fill="none" stroke="#e6e6e6" stroke-width="1.9" stroke-linecap="round" stroke-linejoin="round" d="M1.2 1.2 L5.8 5.75 L1.2 10.3"/></svg>
<span class="m" style="left:15px;top:448.52px;">Light</span>
<svg style="left:257.5px;top:453.02px;" width="7" height="11.5" viewBox="0 0 7 11.5"><path fill="none" stroke="#e6e6e6" stroke-width="1.9" stroke-linecap="round" stroke-linejoin="round" d="M1.2 1.2 L5.8 5.75 L1.2 10.3"/></svg>
<span class="m" style="left:15px;top:472.94999999999993px;">Audio</span>
<svg style="left:257.5px;top:477.44999999999993px;" width="7" height="11.5" viewBox="0 0 7 11.5"><path fill="none" stroke="#e6e6e6" stroke-width="1.9" stroke-linecap="round" stroke-linejoin="round" d="M1.2 1.2 L5.8 5.75 L1.2 10.3"/></svg>
<span class="m" style="left:15px;top:497.3799999999999px;">Video</span>
<svg style="left:257.5px;top:501.8799999999999px;" width="7" height="11.5" viewBox="0 0 7 11.5"><path fill="none" stroke="#e6e6e6" stroke-width="1.9" stroke-linecap="round" stroke-linejoin="round" d="M1.2 1.2 L5.8 5.75 L1.2 10.3"/></svg>
<span class="m" style="left:15px;top:521.81px;">UI</span>
<svg style="left:257.5px;top:526.31px;" width="7" height="11.5" viewBox="0 0 7 11.5"><path fill="none" stroke="#e6e6e6" stroke-width="1.9" stroke-linecap="round" stroke-linejoin="round" d="M1.2 1.2 L5.8 5.75 L1.2 10.3"/></svg>
<span class="m" style="left:15px;top:546.24px;">UI Toolkit</span>
<svg style="left:257.5px;top:550.74px;" width="7" height="11.5" viewBox="0 0 7 11.5"><path fill="none" stroke="#e6e6e6" stroke-width="1.9" stroke-linecap="round" stroke-linejoin="round" d="M1.2 1.2 L5.8 5.75 L1.2 10.3"/></svg>
<span class="m" style="left:15px;top:570.67px;">Camera</span>
<span class="m" style="left:15px;top:595.6999999999999px;">Visual Scripting Scene Variables</span>
<span class="m" style="left:15px;top:619.53px;">Move To View</span>
<span class="m" style="left:15px;top:644.56px;">Align With View</span>
<span class="m" style="left:15px;top:668.9899999999999px;">Align View to Selected</span>
<span class="m" style="left:15px;top:693.42px;">Toggle Active State</span>
<div style="left:15px;top:721.3px;width:252px;height:1px;background:rgba(255,255,255,.13);"></div>
<span class="m" style="left:15px;top:729.8px;">Properties...</span>
</div>
<svg style="left:0px;top:185px;" width="63" height="16" viewBox="0 0 63 16"><path d="M0 8 H52" stroke="#1ee61e" stroke-width="2.6" fill="none"/><path d="M48.5 1.2 L63 8 L48.5 14.8 Z" fill="#1ee61e"/></svg>
<svg style="left:123px;top:256.5px;" width="49" height="16" viewBox="0 0 49 16"><path d="M0 8 H38" stroke="#1ee61e" stroke-width="2.6" fill="none"/><path d="M34.5 1.2 L49 8 L34.5 14.8 Z" fill="#1ee61e"/></svg>
<svg style="left:468px;top:225px;" width="45" height="16" viewBox="0 0 45 16"><path d="M0 8 H34" stroke="#1ee61e" stroke-width="2.6" fill="none"/><path d="M30.5 1.2 L45 8 L30.5 14.8 Z" fill="#1ee61e"/></svg>
</div>
</body></html>
